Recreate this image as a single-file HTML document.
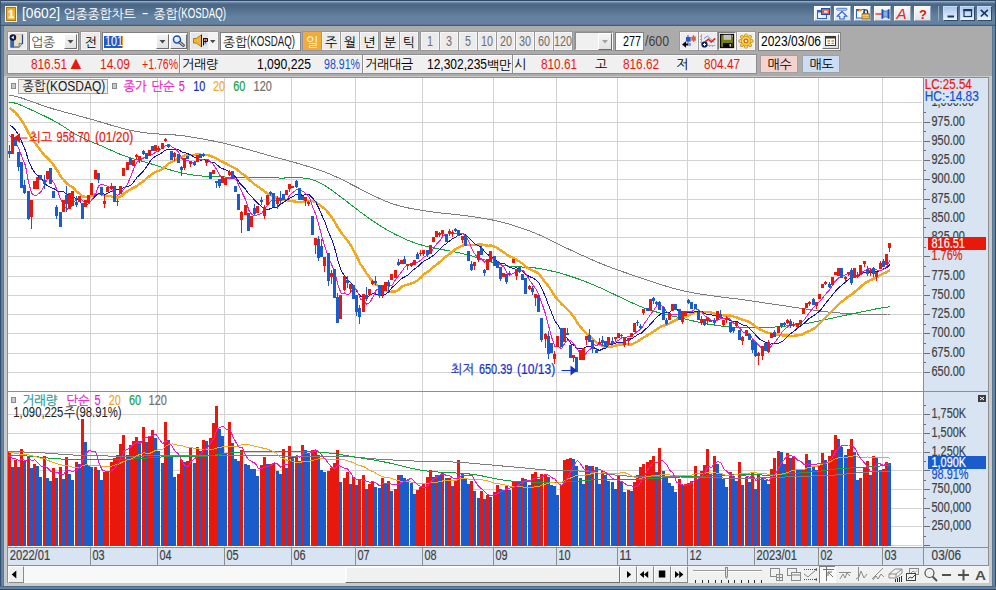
<!DOCTYPE html>
<html lang="ko"><head><meta charset="utf-8"><title>[0602] 업종종합차트 - 종합(KOSDAQ)</title>
<style>
html,body{margin:0;padding:0}
body{width:996px;height:590px;position:relative;overflow:hidden;background:#ababab;font-family:'Liberation Sans','NanumGothic',sans-serif;font-size:12px}
div,span,i{box-sizing:border-box}
.a{position:absolute}
.t{position:absolute;white-space:pre;line-height:14px;height:14px}
.h{position:relative;top:1px}
.x{display:inline-block;white-space:pre;vertical-align:baseline}
.x>i{display:inline-block;font-style:normal;transform-origin:0 50%}
#tb{left:0;top:0;width:996px;height:26px;background:linear-gradient(#2e4866 0,#2e4866 1px,#92acc6 1px,#92acc6 2px,#6a88a6 2px,#6a88a6 3px,#55738f 3px,#55738f 4px,#4a6886 4px,#4a6886 6px,#64829f 17px,#64829f 24px,#5a7896 24px,#5a7896 25px,#3f5d7d 25px,#3f5d7d 26px)}
.fr{background:#5f7f9f}
.btn{position:absolute;height:18px;top:32px;background:#ebebeb;border:1px solid #f6f6f6;box-shadow:0 0 0 1px #989898}
.btn.g{color:#6e6e6e}
.inp{position:absolute;height:19px;top:32px;background:#fff;border:1px solid;border-color:#7e7e7e #868686 #868686 #7e7e7e}
.tbtn{position:absolute;top:6px;width:17px;height:15px;background:linear-gradient(#f6f8fb,#dfe5ee);border:1px solid;border-color:#fff #93a3b8 #93a3b8 #fff}
.wbtn{position:absolute;top:6px;width:15px;height:15px;background:linear-gradient(#a7c6ee,#eef5ff);border:1px solid;border-color:#c6dbf5 #2c4a6c #2c4a6c #c6dbf5}
.dd{background:linear-gradient(#f4f4f4,#e2e2e2);border-color:#fff #6e6e6e #6e6e6e #fff;box-shadow:none}
.cell{position:absolute;top:55px;height:18px;background:#f0f0f0;border-left:1px solid #fcfcfc;border-top:1px solid #fcfcfc}
svg{position:absolute;left:0;top:0;overflow:visible}
svg text{font-family:'Liberation Sans','NanumGothic',sans-serif;white-space:pre}
svg text.s{stroke-width:.2px;paint-order:stroke}
</style></head>
<body>
<div class="a" id="tb"></div>
<div class="a" style="left:995px;top:0;width:1px;height:26px;background:#2f4b69"></div><div class="a" style="left:0;top:0;width:1px;height:26px;background:#36526f"></div>
<div class="a" style="left:0;top:26px;width:4px;height:564px;background:linear-gradient(90deg,#36526f 0,#36526f 1px,#5b7b9b 1px,#5b7b9b 2px,#6989a9 2px,#6989a9 3px,#597999 3px)"></div>
<div class="a" style="left:992px;top:26px;width:4px;height:564px;background:linear-gradient(90deg,#587796 0,#587796 1px,#6685a3 1px,#6685a3 3px,#2f4b69 3px)"></div>
<div class="a" style="left:0;top:586px;width:996px;height:4px;background:linear-gradient(#4a6886 0,#4a6886 1px,#6484a2 1px,#6080a0 3px,#2f4b69 3px)"></div>
<div class="a" style="left:4px;top:76px;width:988px;height:510px;background:#c9c9c9"></div>
<div class="a" style="left:5px;top:6px;width:12px;height:16px;background:#fff3d6;padding:1px"><div style="width:10px;height:14px;border:1px solid #b07810;background:linear-gradient(#e8a528,#f5b938 60%,#e9a320)"></div></div>
<div class="t " style="left:21.5px;top:5.5px;color:#fff;font-size:12px;"><span class="x" style="width:42.0px;font-size:14px"><i style="transform:scaleX(0.981)">[0602] </i></span><span class="h" style="font-size:13px;letter-spacing:-0.22px">업종종합차트</span><span class="x" style="width:18.0px;font-size:14px"><i style="transform:scaleX(1.447)"> - </i></span><span class="h" style="font-size:13px;letter-spacing:-0.22px">종합</span><span class="x" style="width:48.0px;font-size:14px"><i style="transform:scaleX(0.693)">(KOSDAQ)</i></span></div>
<div class="tbtn" style="left:814px"></div>
<div class="tbtn" style="left:834px"></div>
<div class="tbtn" style="left:854px"></div>
<div class="tbtn" style="left:874px"></div>
<div class="tbtn" style="left:894px"></div>
<div class="tbtn" style="left:914px"></div>
<div class="a" style="left:938px;top:6px;width:1px;height:15px;background:#9aa9b8"></div>
<div class="wbtn" style="left:943px"></div>
<div class="wbtn" style="left:960px"></div>
<div class="wbtn" style="left:977px"></div>
<div class="btn " style="left:8px;width:19px;"></div>
<div class="inp" style="left:29px;width:50px"></div>
<div class="t " style="left:31.0px;top:35px;color:#5a5a5a;font-size:12px;"><span class="h" style="font-size:13px;letter-spacing:-0.22px">업종</span></div>
<div class="btn dd" style="left:64px;top:34px;width:13px;height:15px"></div>
<div class="btn " style="left:81px;width:19px;"><div class="t" style="left:2.5px;top:2px"><span class="h" style="font-size:13px;letter-spacing:-0.22px">전</span></div></div>
<div class="inp" style="left:102px;width:86px"></div>
<div class="a" style="left:104px;top:36px;width:18px;height:12px;background:#1c5ccd"></div><div class="a" style="left:122px;top:36px;width:1px;height:12px;background:#f0a030"></div>
<div class="t " style="left:104.5px;top:34px;color:#fff;font-size:12px;"><span class="x" style="width:18.0px;font-size:14px"><i style="transform:scaleX(0.771)">101</i></span></div>
<div class="btn dd" style="left:156px;top:34px;width:13px;height:15px"></div>
<div class="btn dd" style="left:170px;top:34px;width:17px;height:15px"></div>
<div class="btn" style="left:190px;width:28px;background:linear-gradient(90deg,#e6e6e6 0,#e6e6e6 17px,#f2f2f2 17px)"></div>
<div class="inp" style="left:220px;width:81px"></div>
<div class="t " style="left:223.0px;top:34px;color:#202020;font-size:12px;"><span class="h" style="font-size:13px;letter-spacing:-0.22px">종합</span><span class="x" style="width:48.0px;font-size:14px"><i style="transform:scaleX(0.693)">(KOSDAQ)</i></span></div>
<div class="btn " style="left:303px;width:18px;background:#f1ab3a;border-color:#f1ab3a;color:#fff;box-shadow:0 0 0 1px #8e97a6"><div class="t" style="left:2.0px;top:2px"><span class="h" style="font-size:13px;letter-spacing:-0.22px">일</span></div></div>
<div class="btn " style="left:322px;width:18px;"><div class="t" style="left:2.0px;top:2px"><span class="h" style="font-size:13px;letter-spacing:-0.22px">주</span></div></div>
<div class="btn " style="left:341px;width:18px;"><div class="t" style="left:2.0px;top:2px"><span class="h" style="font-size:13px;letter-spacing:-0.22px">월</span></div></div>
<div class="btn " style="left:360px;width:18px;"><div class="t" style="left:2.0px;top:2px"><span class="h" style="font-size:13px;letter-spacing:-0.22px">년</span></div></div>
<div class="btn " style="left:381px;width:18px;"><div class="t" style="left:2.0px;top:2px"><span class="h" style="font-size:13px;letter-spacing:-0.22px">분</span></div></div>
<div class="btn " style="left:400px;width:18px;"><div class="t" style="left:2.0px;top:2px"><span class="h" style="font-size:13px;letter-spacing:-0.22px">틱</span></div></div>
<div class="btn g" style="left:421px;width:18px;"><div class="t" style="left:5.0px;top:1px"><span class="x" style="width:6.0px;font-size:14px"><i style="transform:scaleX(0.771)">1</i></span></div></div>
<div class="btn g" style="left:440px;width:18px;"><div class="t" style="left:5.0px;top:1px"><span class="x" style="width:6.0px;font-size:14px"><i style="transform:scaleX(0.771)">3</i></span></div></div>
<div class="btn g" style="left:459px;width:18px;"><div class="t" style="left:5.0px;top:1px"><span class="x" style="width:6.0px;font-size:14px"><i style="transform:scaleX(0.771)">5</i></span></div></div>
<div class="btn g" style="left:478px;width:18px;"><div class="t" style="left:2.0px;top:1px"><span class="x" style="width:12.0px;font-size:14px"><i style="transform:scaleX(0.771)">10</i></span></div></div>
<div class="btn g" style="left:497px;width:18px;"><div class="t" style="left:2.0px;top:1px"><span class="x" style="width:12.0px;font-size:14px"><i style="transform:scaleX(0.771)">20</i></span></div></div>
<div class="btn g" style="left:516px;width:18px;"><div class="t" style="left:2.0px;top:1px"><span class="x" style="width:12.0px;font-size:14px"><i style="transform:scaleX(0.771)">30</i></span></div></div>
<div class="btn g" style="left:535px;width:18px;"><div class="t" style="left:2.0px;top:1px"><span class="x" style="width:12.0px;font-size:14px"><i style="transform:scaleX(0.771)">60</i></span></div></div>
<div class="btn g" style="left:554px;width:18px;"><div class="t" style="left:-1.0px;top:1px"><span class="x" style="width:18.0px;font-size:14px"><i style="transform:scaleX(0.771)">120</i></span></div></div>
<div class="btn" style="left:575px;width:38px;background:#f0f0f0;border-color:#8c8c8c #f8f8f8 #f8f8f8 #8c8c8c"></div>
<div class="btn dd" style="left:598px;top:33px;width:14px;height:17px"></div>
<div class="inp" style="left:615px;width:29px"></div>
<div class="t " style="left:623.0px;top:34px;color:#000;font-size:12px;"><span class="x" style="width:18.0px;font-size:14px"><i style="transform:scaleX(0.771)">277</i></span></div>
<div class="t " style="left:645.0px;top:34px;color:#404040;font-size:12px;"><span class="x" style="width:24.0px;font-size:14px"><i style="transform:scaleX(0.881)">/600</i></span></div>
<div class="btn " style="left:680px;width:18px;background:#efecef"></div>
<div class="btn " style="left:699px;width:18px;background:#efecef"></div>
<div class="btn " style="left:737px;width:18px;background:#efecef"></div>
<div class="btn " style="left:718px;width:18px;background:#efecef;border-color:#7a7a7a #fafafa #fafafa #7a7a7a"></div>
<div class="inp" style="left:758px;width:83px"></div>
<div class="t " style="left:761.0px;top:34px;color:#000;font-size:12px;"><span class="x" style="width:60.0px;font-size:14px"><i style="transform:scaleX(0.856)">2023/03/06</i></span></div>
<div class="btn dd" style="left:822px;top:34px;width:17px;height:15px"></div>
<div class="a" style="left:7px;top:54px;width:750px;height:20px;background:#8e8e8e"></div>
<div class="cell" style="left:8px;width:171px"></div>
<div class="cell" style="left:180px;width:182px"></div>
<div class="cell" style="left:363px;width:149px"></div>
<div class="cell" style="left:513px;width:243px"></div>
<div class="t " style="left:30.5px;top:57px;color:#e8190c;font-size:12px;"><span class="x" style="width:36.0px;font-size:14px"><i style="transform:scaleX(0.841)">816.51</i></span></div>
<div class="t" style="left:67px;top:53px;color:#e8190c;font-size:18px;line-height:20px;height:20px;font-family:'Liberation Sans','NanumGothic','DejaVu Sans',sans-serif">▲</div>
<div class="t " style="left:100.0px;top:57px;color:#e8190c;font-size:12px;"><span class="x" style="width:30.0px;font-size:14px"><i style="transform:scaleX(0.856)">14.09</i></span></div>
<div class="t " style="left:142.0px;top:57px;color:#e8190c;font-size:12px;"><span class="x" style="width:36.0px;font-size:14px"><i style="transform:scaleX(0.752)">+1.76%</i></span></div>
<div class="t " style="left:182.0px;top:57px;color:#000;font-size:12px;"><span class="h" style="font-size:13px;letter-spacing:-0.22px">거래량</span></div>
<div class="t " style="left:256.5px;top:57px;color:#000;font-size:12px;"><span class="x" style="width:54.0px;font-size:14px"><i style="transform:scaleX(0.867)">1,090,225</i></span></div>
<div class="t " style="left:324.0px;top:57px;color:#1450d0;font-size:12px;"><span class="x" style="width:36.0px;font-size:14px"><i style="transform:scaleX(0.758)">98.91%</i></span></div>
<div class="t " style="left:365.0px;top:57px;color:#000;font-size:12px;"><span class="h" style="font-size:13px;letter-spacing:-0.22px">거래대금</span></div>
<div class="t " style="left:427.0px;top:57px;color:#000;font-size:12px;"><span class="x" style="width:60.0px;font-size:14px"><i style="transform:scaleX(0.856)">12,302,235</i></span><span class="h" style="font-size:13px;letter-spacing:-0.22px">백만</span></div>
<div class="t " style="left:514.0px;top:57px;color:#000;font-size:12px;"><span class="h" style="font-size:13px;letter-spacing:-0.22px">시</span></div>
<div class="t " style="left:541.0px;top:57px;color:#e8190c;font-size:12px;"><span class="x" style="width:36.0px;font-size:14px"><i style="transform:scaleX(0.841)">810.61</i></span></div>
<div class="t " style="left:595.0px;top:57px;color:#000;font-size:12px;"><span class="h" style="font-size:13px;letter-spacing:-0.22px">고</span></div>
<div class="t " style="left:622.5px;top:57px;color:#e8190c;font-size:12px;"><span class="x" style="width:36.0px;font-size:14px"><i style="transform:scaleX(0.841)">816.62</i></span></div>
<div class="t " style="left:676.0px;top:57px;color:#000;font-size:12px;"><span class="h" style="font-size:13px;letter-spacing:-0.22px">저</span></div>
<div class="t " style="left:703.5px;top:57px;color:#e8190c;font-size:12px;"><span class="x" style="width:36.0px;font-size:14px"><i style="transform:scaleX(0.841)">804.47</i></span></div>
<div class="a" style="left:760px;top:55px;width:38px;height:18px;background:#f6d2cd;border:1px solid #a4a0a0"></div>
<div class="t " style="left:767.5px;top:57px;color:#000;font-size:12px;"><span class="h" style="font-size:13px;letter-spacing:-0.22px">매수</span></div>
<div class="a" style="left:802px;top:55px;width:38px;height:18px;background:#c9ddf5;border:1px solid #a0a2a4"></div>
<div class="t " style="left:809.5px;top:57px;color:#000;font-size:12px;"><span class="h" style="font-size:13px;letter-spacing:-0.22px">매도</span></div>
<div class="a" style="left:8px;top:566px;width:981px;height:17px;background:#f1f1f1"></div>
<div class="a" style="left:24px;top:566px;width:596px;height:17px;background:#f8f8f8"></div>
<div class="a" style="left:345px;top:566px;width:275px;height:17px;background:#f0f0f0;border:1px solid;border-color:#fff #707070 #707070 #fff;box-shadow:inset 1px 1px 0 #fbfbfb"></div>
<div class="a" style="left:8px;top:566px;width:16px;height:17px;background:#f0f0f0;border:1px solid;border-color:#fdfdfd #8a8a8a #8a8a8a #fdfdfd"><svg width="14" height="15"></svg></div>
<div class="a" style="left:620px;top:566px;width:17px;height:17px;background:#f0f0f0;border:1px solid;border-color:#fdfdfd #8a8a8a #8a8a8a #fdfdfd"><svg width="15" height="15"></svg></div>
<div class="a" style="left:637px;top:566px;width:17px;height:17px;background:#f0f0f0;border:1px solid;border-color:#fdfdfd #8a8a8a #8a8a8a #fdfdfd"><svg width="15" height="15"></svg></div>
<div class="a" style="left:654px;top:566px;width:17px;height:17px;background:#f0f0f0;border:1px solid;border-color:#fdfdfd #8a8a8a #8a8a8a #fdfdfd"><svg width="15" height="15"></svg></div>
<div class="a" style="left:671px;top:566px;width:17px;height:17px;background:#f0f0f0;border:1px solid;border-color:#fdfdfd #8a8a8a #8a8a8a #fdfdfd"><svg width="15" height="15"></svg></div>
<svg width="996" height="590" viewBox="0 0 996 590">
<rect x="8" y="78" width="915" height="469" fill="#fff"/>
<rect x="923" y="78" width="66" height="488" fill="#d8e4f1"/>
<rect x="8" y="548" width="915" height="18" fill="#d8e4f1"/>
<path d="M8 102.5H922M8 122.5H922M8 141.5H922M8 160.5H922M8 179.5H922M8 199.5H922M8 218.5H922M8 237.5H922M8 256.5H922M8 276.5H922M8 295.5H922M8 314.5H922M8 333.5H922M8 353.5H922M8 372.5H922M8 414.5H922M8 433.5H922M8 452.5H922M8 470.5H922M8 489.5H922M8 508.5H922M8 526.5H922M8 545.5H922M90.5 78V391M90.5 392V547M157.5 78V391M157.5 392V547M224.5 78V391M224.5 392V547M291.5 78V391M291.5 392V547M355.5 78V391M355.5 392V547M422.5 78V391M422.5 392V547M493.5 78V391M493.5 392V547M556.5 78V391M556.5 392V547M617.5 78V391M617.5 392V547M687.5 78V391M687.5 392V547M754.5 78V391M754.5 392V547M818.5 78V391M818.5 392V547M882.5 78V391M882.5 392V547" stroke="#d2d2d2" stroke-width="1" fill="none" shape-rendering="crispEdges"/>
<path d="M8 452h3V546h-3zM14 460h3V546h-3zM20 449h3V546h-3zM27 457h3V546h-3zM33 464h3V546h-3zM43 456h3V546h-3zM52 468h3V546h-3zM59 467h3V546h-3zM65 457h3V546h-3zM75 462h3V546h-3zM81 419h3V546h-3zM94 467h3V546h-3zM103 472h3V546h-3zM106 471h3V546h-3zM110 462h3V546h-3zM113 458h3V546h-3zM116 455h3V546h-3zM119 444h3V546h-3zM122 435h3V546h-3zM129 445h3V546h-3zM132 441h3V546h-3zM135 437h3V546h-3zM142 427h3V546h-3zM148 436h3V546h-3zM151 430h3V546h-3zM164 422h3V546h-3zM177 474h3V546h-3zM180 460h3V546h-3zM186 461h3V546h-3zM189 448h3V546h-3zM196 447h3V546h-3zM202 440h3V546h-3zM209 438h3V546h-3zM212 423h3V546h-3zM215 406h3V546h-3zM228 422h3V546h-3zM240 450h3V546h-3zM260 465h3V546h-3zM263 457h3V546h-3zM269 464h3V546h-3zM272 463h3V546h-3zM282 449h3V546h-3zM288 446h3V546h-3zM295 456h3V546h-3zM301 445h3V546h-3zM311 450h3V546h-3zM314 450h3V546h-3zM327 471h3V546h-3zM330 468h3V546h-3zM333 463h3V546h-3zM336 450h3V546h-3zM343 478h3V546h-3zM346 472h3V546h-3zM352 477h3V546h-3zM358 480h3V546h-3zM362 475h3V546h-3zM368 484h3V546h-3zM371 481h3V546h-3zM381 478h3V546h-3zM387 481h3V546h-3zM394 489h3V546h-3zM397 475h3V546h-3zM416 490h3V546h-3zM419 487h3V546h-3zM422 484h3V546h-3zM426 477h3V546h-3zM429 470h3V546h-3zM435 475h3V546h-3zM441 473h3V546h-3zM448 478h3V546h-3zM454 480h3V546h-3zM457 460h3V546h-3zM470 481h3V546h-3zM480 491h3V546h-3zM486 495h3V546h-3zM493 492h3V546h-3zM496 485h3V546h-3zM505 486h3V546h-3zM512 482h3V546h-3zM515 482h3V546h-3zM521 478h3V546h-3zM531 474h3V546h-3zM534 472h3V546h-3zM540 474h3V546h-3zM544 474h3V546h-3zM560 485h3V546h-3zM563 460h3V546h-3zM566 459h3V546h-3zM569 458h3V546h-3zM585 465h3V546h-3zM591 466h3V546h-3zM601 471h3V546h-3zM617 476h3V546h-3zM627 490h3V546h-3zM633 482h3V546h-3zM636 475h3V546h-3zM639 467h3V546h-3zM642 464h3V546h-3zM646 462h3V546h-3zM649 460h3V546h-3zM652 456h3V546h-3zM658 448h3V546h-3zM678 479h3V546h-3zM684 484h3V546h-3zM687 483h3V546h-3zM690 481h3V546h-3zM694 466h3V546h-3zM700 471h3V546h-3zM703 465h3V546h-3zM706 449h3V546h-3zM713 456h3V546h-3zM729 472h3V546h-3zM738 462h3V546h-3zM745 477h3V546h-3zM751 472h3V546h-3zM757 475h3V546h-3zM770 469h3V546h-3zM773 458h3V546h-3zM777 451h3V546h-3zM786 453h3V546h-3zM792 457h3V546h-3zM802 470h3V546h-3zM805 454h3V546h-3zM818 465h3V546h-3zM821 453h3V546h-3zM828 456h3V546h-3zM831 450h3V546h-3zM834 435h3V546h-3zM847 449h3V546h-3zM850 439h3V546h-3zM859 478h3V546h-3zM863 467h3V546h-3zM866 461h3V546h-3zM872 456h3V546h-3zM882 469h3V546h-3zM885 462h3V546h-3z" fill="#e8190c" shape-rendering="crispEdges"/>
<path d="M11 467h3V546h-3zM17 467h3V546h-3zM23 461h3V546h-3zM30 468h3V546h-3zM36 466h3V546h-3zM39 477h3V546h-3zM46 478h3V546h-3zM49 481h3V546h-3zM55 478h3V546h-3zM62 479h3V546h-3zM68 474h3V546h-3zM71 480h3V546h-3zM78 464h3V546h-3zM84 442h3V546h-3zM87 465h3V546h-3zM90 467h3V546h-3zM97 470h3V546h-3zM100 480h3V546h-3zM126 455h3V546h-3zM138 441h3V546h-3zM145 442h3V546h-3zM154 438h3V546h-3zM157 451h3V546h-3zM161 463h3V546h-3zM167 440h3V546h-3zM170 456h3V546h-3zM173 477h3V546h-3zM183 462h3V546h-3zM193 463h3V546h-3zM199 451h3V546h-3zM205 441h3V546h-3zM218 429h3V546h-3zM221 436h3V546h-3zM224 453h3V546h-3zM231 443h3V546h-3zM234 459h3V546h-3zM237 461h3V546h-3zM244 464h3V546h-3zM247 465h3V546h-3zM250 469h3V546h-3zM253 469h3V546h-3zM256 476h3V546h-3zM266 464h3V546h-3zM276 471h3V546h-3zM279 474h3V546h-3zM285 468h3V546h-3zM291 457h3V546h-3zM298 461h3V546h-3zM304 450h3V546h-3zM307 454h3V546h-3zM317 455h3V546h-3zM320 470h3V546h-3zM323 472h3V546h-3zM339 482h3V546h-3zM349 484h3V546h-3zM355 485h3V546h-3zM365 489h3V546h-3zM374 487h3V546h-3zM378 488h3V546h-3zM384 484h3V546h-3zM390 491h3V546h-3zM400 475h3V546h-3zM403 478h3V546h-3zM406 480h3V546h-3zM410 483h3V546h-3zM413 494h3V546h-3zM432 477h3V546h-3zM438 475h3V546h-3zM445 478h3V546h-3zM451 486h3V546h-3zM461 474h3V546h-3zM464 478h3V546h-3zM467 484h3V546h-3zM473 491h3V546h-3zM477 498h3V546h-3zM483 499h3V546h-3zM489 497h3V546h-3zM499 489h3V546h-3zM502 490h3V546h-3zM508 490h3V546h-3zM518 481h3V546h-3zM524 479h3V546h-3zM528 485h3V546h-3zM537 479h3V546h-3zM547 477h3V546h-3zM550 485h3V546h-3zM553 486h3V546h-3zM556 495h3V546h-3zM572 459h3V546h-3zM575 466h3V546h-3zM579 478h3V546h-3zM582 484h3V546h-3zM588 466h3V546h-3zM595 467h3V546h-3zM598 484h3V546h-3zM604 475h3V546h-3zM607 481h3V546h-3zM611 482h3V546h-3zM614 489h3V546h-3zM620 481h3V546h-3zM623 492h3V546h-3zM630 491h3V546h-3zM655 472h3V546h-3zM662 471h3V546h-3zM665 478h3V546h-3zM668 483h3V546h-3zM671 486h3V546h-3zM674 492h3V546h-3zM681 485h3V546h-3zM697 479h3V546h-3zM709 474h3V546h-3zM716 464h3V546h-3zM719 473h3V546h-3zM722 479h3V546h-3zM725 487h3V546h-3zM732 476h3V546h-3zM735 481h3V546h-3zM741 485h3V546h-3zM748 482h3V546h-3zM754 489h3V546h-3zM761 477h3V546h-3zM764 480h3V546h-3zM767 484h3V546h-3zM780 452h3V546h-3zM783 464h3V546h-3zM789 458h3V546h-3zM796 469h3V546h-3zM799 470h3V546h-3zM808 460h3V546h-3zM812 467h3V546h-3zM815 470h3V546h-3zM824 460h3V546h-3zM837 439h3V546h-3zM840 447h3V546h-3zM844 455h3V546h-3zM853 452h3V546h-3zM856 480h3V546h-3zM869 475h3V546h-3zM875 458h3V546h-3zM879 470h3V546h-3zM888 463h3V546h-3z" fill="#1b5ccd" shape-rendering="crispEdges"/>
<polyline points="8.5,451.5 11.5,451.6 14.5,451.7 17.5,451.8 20.5,451.9 23.5,452.0 26.5,452.1 29.5,452.2 32.5,452.4 35.5,452.5 38.5,452.7 41.5,452.8 44.5,453.0 47.5,453.2 50.5,453.4 53.5,453.6 56.5,453.9 59.5,454.1 62.5,454.3 65.5,454.5 68.5,454.7 71.5,454.9 74.5,455.1 77.5,455.2 80.5,455.4 83.5,455.5 86.5,455.6 89.5,455.7 92.5,455.7 95.5,455.8 98.5,455.8 101.5,455.9 104.5,455.9 107.5,456.0 110.5,456.1 113.5,456.1 116.5,456.1 119.5,456.2 122.5,456.2 125.5,456.2 128.5,456.2 131.5,456.2 134.5,456.1 137.5,456.1 140.5,456.0 143.5,456.0 146.5,455.9 149.5,455.9 152.5,455.8 155.5,455.8 158.5,455.8 161.5,455.8 164.5,455.7 167.5,455.7 170.5,455.7 173.5,455.7 176.5,455.6 179.5,455.6 182.5,455.6 185.5,455.5 188.5,455.5 191.5,455.4 194.5,455.4 197.5,455.3 200.5,455.3 203.5,455.2 206.5,455.2 209.5,455.1 212.5,455.1 215.5,455.1 218.5,455.0 221.5,455.0 224.5,455.0 227.5,455.0 230.5,455.0 233.5,455.0 236.5,455.0 239.5,455.0 242.5,455.0 245.5,455.1 248.5,455.1 251.5,455.2 254.5,455.2 257.5,455.3 260.5,455.4 263.5,455.5 266.5,455.6 269.5,455.7 272.5,455.8 275.5,455.9 278.5,455.9 281.5,456.0 284.5,456.0 287.5,456.1 290.5,456.1 293.5,456.1 296.5,456.1 299.5,456.2 302.5,456.2 305.5,456.2 308.5,456.2 311.5,456.2 314.5,456.3 317.5,456.3 320.5,456.3 323.5,456.3 326.5,456.3 329.5,456.4 332.5,456.4 335.5,456.4 338.5,456.4 341.5,456.5 344.5,456.6 347.5,456.7 350.5,456.9 353.5,457.0 356.5,457.3 359.5,457.5 362.5,457.8 365.5,458.1 368.5,458.4 371.5,458.6 374.5,458.9 377.5,459.1 380.5,459.3 383.5,459.5 386.5,459.6 389.5,459.8 392.5,460.0 395.5,460.1 398.5,460.3 401.5,460.4 404.5,460.6 407.5,460.7 410.5,460.9 413.5,461.0 416.5,461.2 419.5,461.3 422.5,461.4 425.5,461.5 428.5,461.5 431.5,461.6 434.5,461.7 437.5,461.7 440.5,461.8 443.5,461.8 446.5,461.8 449.5,461.9 452.5,462.0 455.5,462.1 458.5,462.3 461.5,462.5 464.5,462.7 467.5,462.9 470.5,463.2 473.5,463.5 476.5,463.7 479.5,464.0 482.5,464.3 485.5,464.5 488.5,464.8 491.5,465.0 494.5,465.3 497.5,465.6 500.5,465.8 503.5,466.1 506.5,466.3 509.5,466.6 512.5,466.9 515.5,467.2 518.5,467.4 521.5,467.7 524.5,468.0 527.5,468.3 530.5,468.6 533.5,468.9 536.5,469.2 539.5,469.5 542.5,469.8 545.5,470.0 548.5,470.2 551.5,470.3 554.5,470.5 557.5,470.6 560.5,470.6 563.5,470.7 566.5,470.7 569.5,470.8 572.5,470.8 575.5,470.9 578.5,471.0 581.5,471.2 584.5,471.4 587.5,471.7 590.5,472.0 593.5,472.4 596.5,472.8 599.5,473.2 602.5,473.6 605.5,474.0 608.5,474.4 611.5,474.7 614.5,475.0 617.5,475.3 620.5,475.6 623.5,475.8 626.5,476.0 629.5,476.1 632.5,476.2 635.5,476.3 638.5,476.4 641.5,476.4 644.5,476.4 647.5,476.4 650.5,476.4 653.5,476.4 656.5,476.4 659.5,476.5 662.5,476.5 665.5,476.6 668.5,476.6 671.5,476.7 674.5,476.8 677.5,476.9 680.5,477.0 683.5,477.2 686.5,477.3 689.5,477.4 692.5,477.5 695.5,477.6 698.5,477.7 701.5,477.7 704.5,477.8 707.5,477.8 710.5,477.9 713.5,477.9 716.5,477.9 719.5,477.9 722.5,478.0 725.5,478.0 728.5,478.0 731.5,478.0 734.5,478.0 737.5,478.1 740.5,478.1 743.5,478.1 746.5,478.1 749.5,478.1 752.5,478.1 755.5,478.0 758.5,478.0 761.5,477.9 764.5,477.8 767.5,477.7 770.5,477.6 773.5,477.5 776.5,477.3 779.5,477.2 782.5,477.1 785.5,477.0 788.5,476.9 791.5,476.7 794.5,476.6 797.5,476.5 800.5,476.4 803.5,476.3 806.5,476.2 809.5,476.1 812.5,476.0 815.5,475.9 818.5,475.9 821.5,475.8 824.5,475.6 827.5,475.5 830.5,475.3 833.5,475.1 836.5,474.9 839.5,474.7 842.5,474.4 845.5,474.1 848.5,473.7 851.5,473.4 854.5,473.1 857.5,472.9 860.5,472.6 863.5,472.4 866.5,472.2 869.5,472.0 872.5,471.9 875.5,471.8 878.5,471.6 881.5,471.5 884.5,471.4 887.5,471.4 890.0,471.3" fill="none" stroke="#7d7d7d" stroke-width="1" shape-rendering="crispEdges" stroke-linejoin="round"/>
<polyline points="8.5,455.4 11.5,455.5 14.5,455.5 17.5,455.5 20.5,455.6 23.5,455.8 26.5,456.0 29.5,456.2 32.5,456.4 35.5,456.7 38.5,457.0 41.5,457.3 44.5,457.7 47.5,458.0 50.5,458.3 53.5,458.5 56.5,458.7 59.5,458.9 62.5,459.1 65.5,459.2 68.5,459.3 71.5,459.4 74.5,459.5 77.5,459.5 80.5,459.6 83.5,459.6 86.5,459.7 89.5,459.7 92.5,459.8 95.5,459.8 98.5,459.8 101.5,459.8 104.5,459.8 107.5,459.8 110.5,459.8 113.5,459.7 116.5,459.7 119.5,459.6 122.5,459.5 125.5,459.4 128.5,459.3 131.5,459.1 134.5,459.0 137.5,458.8 140.5,458.6 143.5,458.4 146.5,458.1 149.5,457.8 152.5,457.6 155.5,457.4 158.5,457.2 161.5,457.0 164.5,456.9 167.5,456.8 170.5,456.8 173.5,456.8 176.5,456.8 179.5,456.9 182.5,456.9 185.5,456.9 188.5,456.9 191.5,456.9 194.5,456.9 197.5,456.8 200.5,456.7 203.5,456.5 206.5,456.2 209.5,455.8 212.5,455.4 215.5,455.0 218.5,454.6 221.5,454.1 224.5,453.7 227.5,453.4 230.5,453.0 233.5,452.7 236.5,452.4 239.5,452.2 242.5,452.0 245.5,451.8 248.5,451.7 251.5,451.5 254.5,451.4 257.5,451.4 260.5,451.4 263.5,451.4 266.5,451.4 269.5,451.4 272.5,451.5 275.5,451.5 278.5,451.5 281.5,451.5 284.5,451.5 287.5,451.6 290.5,451.6 293.5,451.6 296.5,451.6 299.5,451.6 302.5,451.6 305.5,451.6 308.5,451.6 311.5,451.7 314.5,451.8 317.5,452.0 320.5,452.2 323.5,452.4 326.5,452.7 329.5,453.1 332.5,453.5 335.5,453.9 338.5,454.4 341.5,454.8 344.5,455.3 347.5,455.7 350.5,456.2 353.5,456.7 356.5,457.2 359.5,457.7 362.5,458.2 365.5,458.7 368.5,459.2 371.5,459.6 374.5,460.1 377.5,460.7 380.5,461.2 383.5,461.8 386.5,462.4 389.5,463.0 392.5,463.7 395.5,464.4 398.5,465.1 401.5,465.8 404.5,466.6 407.5,467.3 410.5,468.1 413.5,468.7 416.5,469.4 419.5,469.9 422.5,470.4 425.5,470.8 428.5,471.2 431.5,471.5 434.5,471.8 437.5,472.0 440.5,472.2 443.5,472.4 446.5,472.5 449.5,472.7 452.5,472.9 455.5,473.0 458.5,473.1 461.5,473.3 464.5,473.5 467.5,473.8 470.5,474.1 473.5,474.4 476.5,474.9 479.5,475.4 482.5,476.0 485.5,476.6 488.5,477.3 491.5,477.9 494.5,478.5 497.5,479.1 500.5,479.6 503.5,480.1 506.5,480.5 509.5,480.9 512.5,481.2 515.5,481.4 518.5,481.6 521.5,481.7 524.5,481.8 527.5,481.9 530.5,482.0 533.5,482.1 536.5,482.2 539.5,482.2 542.5,482.3 545.5,482.3 548.5,482.4 551.5,482.4 554.5,482.4 557.5,482.4 560.5,482.3 563.5,482.2 566.5,482.0 569.5,481.9 572.5,481.6 575.5,481.4 578.5,481.1 581.5,480.9 584.5,480.6 587.5,480.3 590.5,480.1 593.5,479.8 596.5,479.6 599.5,479.5 602.5,479.3 605.5,479.3 608.5,479.3 611.5,479.3 614.5,479.4 617.5,479.5 620.5,479.6 623.5,479.6 626.5,479.7 629.5,479.7 632.5,479.6 635.5,479.5 638.5,479.4 641.5,479.3 644.5,479.1 647.5,479.0 650.5,478.8 653.5,478.6 656.5,478.4 659.5,478.2 662.5,478.0 665.5,477.8 668.5,477.6 671.5,477.4 674.5,477.3 677.5,477.1 680.5,477.0 683.5,476.9 686.5,476.8 689.5,476.7 692.5,476.6 695.5,476.5 698.5,476.3 701.5,476.2 704.5,476.1 707.5,475.9 710.5,475.8 713.5,475.6 716.5,475.5 719.5,475.3 722.5,475.2 725.5,475.1 728.5,475.1 731.5,475.0 734.5,474.9 737.5,474.9 740.5,474.8 743.5,474.8 746.5,474.8 749.5,474.8 752.5,474.8 755.5,474.8 758.5,474.9 761.5,475.0 764.5,475.0 767.5,475.0 770.5,475.0 773.5,474.9 776.5,474.8 779.5,474.6 782.5,474.4 785.5,474.1 788.5,473.9 791.5,473.6 794.5,473.3 797.5,473.1 800.5,472.9 803.5,472.7 806.5,472.5 809.5,472.2 812.5,471.9 815.5,471.6 818.5,471.3 821.5,470.9 824.5,470.5 827.5,470.1 830.5,469.7 833.5,469.3 836.5,469.0 839.5,468.7 842.5,468.4 845.5,468.2 848.5,468.1 851.5,467.9 854.5,467.8 857.5,467.6 860.5,467.4 863.5,467.2 866.5,467.0 869.5,466.8 872.5,466.6 875.5,466.3 878.5,466.1 881.5,465.9 884.5,465.7 887.5,465.5 890.0,465.4" fill="none" stroke="#15a03c" stroke-width="1" shape-rendering="crispEdges" stroke-linejoin="round"/>
<polyline points="9.5,452.0 12.7,452.8 15.9,453.3 19.1,454.1 22.3,454.0 25.5,454.6 28.6,454.9 31.8,455.8 35.0,456.4 38.2,457.2 41.4,458.5 44.6,458.8 47.8,460.2 51.0,461.7 54.2,462.5 57.4,463.9 60.6,464.4 63.7,465.5 66.9,465.5 70.1,466.3 73.3,467.7 76.5,467.4 79.7,467.6 82.9,465.2 86.1,464.9 89.3,465.1 92.5,465.6 95.7,465.5 98.8,465.8 102.0,466.5 105.2,466.3 108.4,467.0 111.6,466.2 114.8,465.1 118.0,464.4 121.2,462.7 124.4,461.1 127.6,459.9 130.8,459.3 133.9,457.6 137.1,455.5 140.3,454.4 143.5,452.6 146.7,453.7 149.9,453.4 153.1,451.7 156.3,450.2 159.5,449.4 162.7,449.1 165.9,446.2 169.0,444.6 172.2,443.9 175.4,444.6 178.6,445.4 181.8,445.7 185.0,446.6 188.2,447.9 191.4,447.5 194.6,448.4 197.8,448.7 201.0,449.4 204.1,449.3 207.3,450.0 210.5,449.8 213.7,449.2 216.9,448.0 220.1,447.5 223.3,446.8 226.5,446.3 229.7,446.3 232.9,446.4 236.1,446.6 239.2,445.8 242.4,444.6 245.6,444.8 248.8,444.9 252.0,445.3 255.2,446.4 258.4,447.0 261.6,447.9 264.8,448.3 268.0,449.5 271.2,450.6 274.3,451.9 277.5,454.3 280.7,457.7 283.9,458.7 287.1,460.3 290.3,459.9 293.5,461.7 296.7,462.3 299.9,462.4 303.1,461.6 306.3,461.6 309.4,461.1 312.6,460.4 315.8,459.4 319.0,458.7 322.2,458.4 325.4,458.8 328.6,459.5 331.8,459.7 335.0,459.6 338.2,459.0 341.4,459.5 344.5,459.7 347.7,460.9 350.9,461.7 354.1,463.2 357.3,464.6 360.5,465.8 363.7,466.5 366.9,468.7 370.1,470.4 373.3,471.8 376.5,473.6 379.6,475.5 382.8,476.7 386.0,477.4 389.2,477.8 392.4,478.8 395.6,479.9 398.8,480.5 402.0,481.7 405.2,481.5 408.4,481.6 411.6,482.2 414.7,482.7 417.9,483.3 421.1,483.4 424.3,483.6 427.5,483.7 430.7,482.8 433.9,482.4 437.1,482.1 440.3,481.5 443.5,480.8 446.7,480.8 449.8,480.5 453.0,480.7 456.2,480.2 459.4,478.7 462.6,478.7 465.8,478.8 469.0,479.1 472.2,479.2 475.4,479.6 478.6,479.8 481.8,479.8 484.9,480.4 488.1,481.0 491.3,482.0 494.5,483.1 497.7,483.5 500.9,484.2 504.1,484.9 507.3,485.6 510.5,486.2 513.7,486.4 516.9,486.2 520.0,486.2 523.2,487.1 526.4,487.4 529.6,487.7 532.8,487.2 536.0,486.8 539.2,486.2 542.4,485.0 545.6,484.1 548.8,483.1 552.0,482.6 555.1,482.0 558.3,482.1 561.5,482.1 564.7,480.7 567.9,479.1 571.1,477.8 574.3,476.2 577.5,475.4 580.7,475.2 583.9,475.4 587.1,474.7 590.2,474.1 593.4,473.1 596.6,472.8 599.8,473.4 603.0,472.9 606.2,473.0 609.4,473.4 612.6,473.6 615.8,473.8 619.0,473.3 622.2,472.6 625.3,472.9 628.5,474.4 631.7,476.0 634.9,477.2 638.1,478.0 641.3,478.1 644.5,477.4 647.7,476.3 650.9,476.0 654.1,475.5 657.3,475.8 660.4,474.9 663.6,474.2 666.8,474.6 670.0,475.0 673.2,475.2 676.4,475.7 679.6,475.2 682.8,475.7 686.0,475.8 689.2,475.4 692.4,474.9 695.5,473.7 698.7,473.5 701.9,473.3 705.1,473.2 708.3,472.5 711.5,473.1 714.7,472.9 717.9,473.3 721.1,473.3 724.3,474.9 727.5,475.7 730.6,475.4 733.8,475.0 737.0,474.8 740.2,473.3 743.4,473.6 746.6,473.2 749.8,473.1 753.0,472.5 756.2,472.9 759.4,473.4 762.6,473.3 765.7,473.7 768.9,474.7 772.1,475.7 775.3,474.9 778.5,474.6 781.7,474.0 784.9,473.6 788.1,472.3 791.3,470.9 794.5,470.1 797.7,469.8 800.8,469.2 804.0,469.6 807.2,468.0 810.4,467.2 813.6,466.4 816.8,466.3 820.0,465.1 823.2,464.0 826.4,463.2 829.6,462.0 832.8,460.3 835.9,458.6 839.1,457.6 842.3,457.4 845.5,457.6 848.7,456.8 851.9,456.1 855.1,455.8 858.3,457.0 861.5,457.4 864.7,457.3 867.9,456.9 871.0,457.9 874.2,457.7 877.4,457.2 880.6,457.2 883.8,457.4 887.0,457.9 890.2,458.1" fill="none" stroke="#f2a81a" stroke-width="1" shape-rendering="crispEdges" stroke-linejoin="round"/>
<polyline points="9.5,456.3 12.7,458.2 15.9,458.8 19.1,460.7 22.3,459.1 25.5,460.8 28.6,458.8 31.8,460.4 35.0,459.8 38.2,463.2 41.4,466.4 44.6,466.2 47.8,468.2 51.0,471.6 54.2,472.0 57.4,472.2 60.6,474.4 63.7,474.6 66.9,469.7 70.1,470.9 73.3,471.3 76.5,470.3 79.7,467.4 82.9,459.9 86.1,453.4 89.3,450.4 92.5,451.4 95.7,452.0 98.8,462.2 102.0,469.8 105.2,471.1 108.4,471.9 111.6,470.8 114.8,468.4 118.0,463.4 121.2,457.9 124.4,450.7 127.6,449.4 130.8,446.7 133.9,443.9 137.1,442.5 140.3,443.7 143.5,438.1 146.7,437.5 149.9,436.5 153.1,435.2 156.3,434.6 159.5,439.4 162.7,443.6 165.9,440.8 169.0,442.8 172.2,446.5 175.4,451.6 178.6,453.8 181.8,461.4 185.0,465.8 188.2,466.8 191.4,460.9 194.6,458.7 197.8,456.1 201.0,453.8 204.1,449.6 207.3,448.3 210.5,443.3 213.7,438.5 216.9,429.5 220.1,427.4 223.3,426.4 226.5,429.4 229.7,429.2 232.9,436.6 236.1,442.6 239.2,447.6 242.4,447.0 245.6,455.4 248.8,459.8 252.0,461.8 255.2,463.3 258.4,468.5 261.6,468.7 264.8,467.1 268.0,466.2 271.2,465.2 274.3,462.6 277.5,463.8 280.7,467.2 283.9,464.2 287.1,465.0 290.3,461.6 293.5,458.7 296.7,455.1 299.9,457.5 303.1,452.9 306.3,453.7 309.4,453.2 312.6,452.0 315.8,449.8 319.0,451.8 322.2,455.8 325.4,459.4 328.6,463.6 331.8,467.2 335.0,468.8 338.2,464.8 341.4,466.8 344.5,468.2 347.7,469.0 350.9,473.2 354.1,478.6 357.3,479.2 360.5,479.6 363.7,480.2 366.9,481.2 370.1,482.5 373.3,481.7 376.5,483.2 379.6,485.8 382.8,483.6 386.0,483.6 389.2,483.6 392.4,484.4 395.6,484.6 398.8,484.0 402.0,482.2 405.2,481.6 408.4,479.4 411.6,478.2 414.7,482.0 417.9,485.0 421.1,486.8 424.3,487.6 427.5,486.4 430.7,481.6 433.9,479.0 437.1,476.6 440.3,474.8 443.5,474.0 446.7,475.6 449.8,475.8 453.0,478.0 456.2,479.0 459.4,476.4 462.6,475.6 465.8,475.6 469.0,475.2 472.2,475.4 475.4,481.6 478.6,486.4 481.8,489.0 484.9,492.0 488.1,494.8 491.3,496.0 494.5,494.8 497.7,493.6 500.9,491.6 504.1,490.6 507.3,488.4 510.5,488.0 513.7,487.4 516.9,486.0 520.0,484.2 523.2,482.6 526.4,480.4 529.6,481.0 532.8,479.4 536.0,477.6 539.2,477.8 542.4,476.8 545.6,474.6 548.8,475.2 552.0,477.8 555.1,479.2 558.3,483.4 561.5,485.6 564.7,482.2 567.9,477.0 571.1,471.4 574.3,464.2 577.5,460.4 580.7,464.0 583.9,469.0 587.1,470.4 590.2,471.8 593.4,471.8 596.6,469.6 599.8,469.6 603.0,470.8 606.2,472.6 609.4,475.6 612.6,478.5 615.8,479.5 619.0,480.5 622.2,481.7 625.3,483.9 628.5,485.6 631.7,486.0 634.9,487.2 638.1,486.0 641.3,481.0 644.5,475.8 647.7,470.0 650.9,465.6 654.1,461.8 657.3,462.8 660.4,459.6 663.6,461.4 666.8,465.0 670.0,470.4 673.2,473.2 676.4,482.0 679.6,483.6 682.8,485.0 686.0,485.2 689.2,484.6 692.4,482.4 695.5,479.8 698.7,478.6 701.9,476.0 705.1,472.4 708.3,466.0 711.5,467.6 714.7,463.0 717.9,461.6 721.1,463.2 724.3,469.2 727.5,471.8 730.6,475.0 733.8,477.4 737.0,479.0 740.2,475.6 743.4,475.2 746.6,476.2 749.8,477.4 753.0,475.6 756.2,481.0 759.4,479.0 762.6,479.0 765.7,478.6 768.9,481.0 772.1,477.0 775.3,473.6 778.5,468.4 781.7,462.8 784.9,458.8 788.1,455.6 791.3,455.6 794.5,456.8 797.7,460.2 800.8,461.4 804.0,464.7 807.2,463.9 810.4,464.5 813.6,464.1 816.8,464.1 820.0,463.2 823.2,463.0 826.4,463.0 829.6,460.8 832.8,456.8 835.9,450.8 839.1,448.0 842.3,445.4 845.5,445.2 848.7,445.0 851.9,445.8 855.1,448.4 858.3,455.0 861.5,459.6 864.7,463.2 867.9,467.6 871.0,472.2 874.2,467.4 877.4,463.4 880.6,464.0 883.8,465.6 887.0,463.0 890.2,464.4" fill="none" stroke="#e81cc8" stroke-width="1" shape-rendering="crispEdges" stroke-linejoin="round"/>
<polyline points="8.5,94.9 11.5,95.4 14.5,96.1 17.5,96.8 20.5,97.7 23.5,98.7 26.5,99.7 29.5,100.8 32.5,101.9 35.5,102.9 38.5,104.0 41.5,105.1 44.5,106.1 47.5,107.1 50.5,108.0 53.5,109.0 56.5,109.8 59.5,110.7 62.5,111.5 65.5,112.3 68.5,113.1 71.5,113.9 74.5,114.7 77.5,115.5 80.5,116.3 83.5,117.1 86.5,118.0 89.5,118.8 92.5,119.7 95.5,120.5 98.5,121.4 101.5,122.3 104.5,123.2 107.5,124.0 110.5,125.0 113.5,125.8 116.5,126.7 119.5,127.5 122.5,128.3 125.5,129.1 128.5,129.8 131.5,130.5 134.5,131.1 137.5,131.6 140.5,132.1 143.5,132.6 146.5,133.0 149.5,133.3 152.5,133.6 155.5,133.8 158.5,134.0 161.5,134.2 164.5,134.3 167.5,134.4 170.5,134.6 173.5,134.8 176.5,135.1 179.5,135.4 182.5,135.7 185.5,136.1 188.5,136.6 191.5,137.1 194.5,137.6 197.5,138.1 200.5,138.6 203.5,139.1 206.5,139.7 209.5,140.3 212.5,140.8 215.5,141.4 218.5,142.1 221.5,142.7 224.5,143.4 227.5,144.1 230.5,144.8 233.5,145.6 236.5,146.3 239.5,147.2 242.5,148.0 245.5,148.8 248.5,149.6 251.5,150.5 254.5,151.3 257.5,152.2 260.5,153.1 263.5,153.9 266.5,154.8 269.5,155.6 272.5,156.5 275.5,157.3 278.5,158.1 281.5,158.9 284.5,159.7 287.5,160.5 290.5,161.3 293.5,162.2 296.5,163.0 299.5,163.9 302.5,164.8 305.5,165.7 308.5,166.6 311.5,167.6 314.5,168.5 317.5,169.5 320.5,170.5 323.5,171.6 326.5,172.7 329.5,173.9 332.5,175.2 335.5,176.5 338.5,177.9 341.5,179.4 344.5,180.9 347.5,182.4 350.5,184.0 353.5,185.5 356.5,187.0 359.5,188.6 362.5,190.1 365.5,191.6 368.5,193.2 371.5,194.7 374.5,196.2 377.5,197.6 380.5,198.9 383.5,200.3 386.5,201.5 389.5,202.7 392.5,203.8 395.5,204.7 398.5,205.6 401.5,206.4 404.5,207.1 407.5,207.8 410.5,208.4 413.5,208.9 416.5,209.4 419.5,209.9 422.5,210.4 425.5,210.9 428.5,211.3 431.5,211.8 434.5,212.2 437.5,212.6 440.5,212.9 443.5,213.3 446.5,213.6 449.5,213.9 452.5,214.2 455.5,214.5 458.5,214.8 461.5,215.2 464.5,215.5 467.5,215.9 470.5,216.3 473.5,216.8 476.5,217.2 479.5,217.7 482.5,218.2 485.5,218.8 488.5,219.3 491.5,219.8 494.5,220.4 497.5,221.1 500.5,221.8 503.5,222.5 506.5,223.4 509.5,224.2 512.5,225.1 515.5,226.1 518.5,227.1 521.5,228.1 524.5,229.1 527.5,230.2 530.5,231.3 533.5,232.5 536.5,233.7 539.5,235.0 542.5,236.3 545.5,237.7 548.5,239.2 551.5,240.7 554.5,242.2 557.5,243.7 560.5,245.1 563.5,246.6 566.5,248.1 569.5,249.5 572.5,250.9 575.5,252.3 578.5,253.7 581.5,255.1 584.5,256.4 587.5,257.8 590.5,259.1 593.5,260.5 596.5,261.7 599.5,263.0 602.5,264.2 605.5,265.4 608.5,266.6 611.5,267.7 614.5,268.8 617.5,269.9 620.5,270.9 623.5,272.0 626.5,273.0 629.5,274.1 632.5,275.1 635.5,276.1 638.5,277.2 641.5,278.2 644.5,279.3 647.5,280.3 650.5,281.3 653.5,282.3 656.5,283.2 659.5,284.2 662.5,285.1 665.5,286.0 668.5,286.9 671.5,287.8 674.5,288.6 677.5,289.4 680.5,290.1 683.5,290.8 686.5,291.5 689.5,292.1 692.5,292.7 695.5,293.2 698.5,293.7 701.5,294.2 704.5,294.7 707.5,295.1 710.5,295.6 713.5,296.0 716.5,296.4 719.5,296.8 722.5,297.2 725.5,297.6 728.5,297.9 731.5,298.3 734.5,298.6 737.5,299.0 740.5,299.4 743.5,299.8 746.5,300.2 749.5,300.6 752.5,301.1 755.5,301.5 758.5,302.0 761.5,302.4 764.5,302.9 767.5,303.3 770.5,303.7 773.5,304.2 776.5,304.6 779.5,305.1 782.5,305.5 785.5,306.0 788.5,306.4 791.5,306.9 794.5,307.3 797.5,307.8 800.5,308.2 803.5,308.7 806.5,309.1 809.5,309.6 812.5,310.0 815.5,310.4 818.5,310.8 821.5,311.2 824.5,311.6 827.5,311.9 830.5,312.3 833.5,312.5 836.5,312.8 839.5,313.0 842.5,313.3 845.5,313.5 848.5,313.7 851.5,313.8 854.5,313.9 857.5,314.0 860.5,314.1 863.5,314.1 866.5,314.2 869.5,314.2 872.5,314.2 875.5,314.1 878.5,314.1 881.5,314.1 884.5,314.1 887.5,314.0 890.0,314.0" fill="none" stroke="#7d7d7d" stroke-width="1" shape-rendering="crispEdges" stroke-linejoin="round"/>
<polyline points="8.5,101.9 11.5,102.4 14.5,103.0 17.5,103.9 20.5,105.0 23.5,106.2 26.5,107.6 29.5,109.0 32.5,110.5 35.5,111.8 38.5,113.2 41.5,114.6 44.5,116.0 47.5,117.5 50.5,119.0 53.5,120.6 56.5,122.3 59.5,124.0 62.5,125.9 65.5,127.8 68.5,129.8 71.5,131.8 74.5,133.6 77.5,135.3 80.5,136.9 83.5,138.3 86.5,139.7 89.5,141.0 92.5,142.3 95.5,143.5 98.5,144.7 101.5,145.9 104.5,147.2 107.5,148.6 110.5,150.0 113.5,151.4 116.5,152.7 119.5,154.0 122.5,155.2 125.5,156.3 128.5,157.3 131.5,158.2 134.5,159.1 137.5,159.9 140.5,160.7 143.5,161.6 146.5,162.5 149.5,163.4 152.5,164.3 155.5,165.2 158.5,166.2 161.5,167.2 164.5,168.2 167.5,169.1 170.5,170.0 173.5,170.9 176.5,171.7 179.5,172.5 182.5,173.2 185.5,173.8 188.5,174.3 191.5,174.8 194.5,175.2 197.5,175.6 200.5,175.9 203.5,176.1 206.5,176.3 209.5,176.4 212.5,176.6 215.5,176.7 218.5,176.8 221.5,176.9 224.5,177.0 227.5,177.1 230.5,177.1 233.5,177.1 236.5,177.2 239.5,177.2 242.5,177.2 245.5,177.3 248.5,177.3 251.5,177.4 254.5,177.4 257.5,177.5 260.5,177.6 263.5,177.7 266.5,177.8 269.5,177.8 272.5,177.9 275.5,177.9 278.5,178.0 281.5,178.0 284.5,178.0 287.5,177.9 290.5,177.9 293.5,177.8 296.5,177.8 299.5,177.9 302.5,178.0 305.5,178.3 308.5,178.7 311.5,179.4 314.5,180.4 317.5,181.6 320.5,183.1 323.5,184.8 326.5,186.6 329.5,188.6 332.5,190.8 335.5,193.0 338.5,195.2 341.5,197.5 344.5,199.8 347.5,202.1 350.5,204.5 353.5,206.8 356.5,209.1 359.5,211.4 362.5,213.6 365.5,215.8 368.5,218.0 371.5,220.1 374.5,222.1 377.5,224.1 380.5,226.0 383.5,227.8 386.5,229.6 389.5,231.3 392.5,232.9 395.5,234.5 398.5,235.9 401.5,237.4 404.5,238.7 407.5,240.1 410.5,241.3 413.5,242.4 416.5,243.4 419.5,244.4 422.5,245.3 425.5,246.1 428.5,246.8 431.5,247.5 434.5,248.1 437.5,248.7 440.5,249.3 443.5,249.8 446.5,250.4 449.5,250.9 452.5,251.5 455.5,252.1 458.5,252.7 461.5,253.4 464.5,254.1 467.5,254.8 470.5,255.6 473.5,256.5 476.5,257.4 479.5,258.3 482.5,259.2 485.5,260.2 488.5,261.2 491.5,262.1 494.5,263.1 497.5,263.9 500.5,264.7 503.5,265.4 506.5,265.9 509.5,266.3 512.5,266.6 515.5,266.8 518.5,266.9 521.5,267.0 524.5,267.1 527.5,267.3 530.5,267.5 533.5,267.8 536.5,268.1 539.5,268.6 542.5,269.1 545.5,269.7 548.5,270.3 551.5,271.0 554.5,271.7 557.5,272.4 560.5,273.2 563.5,274.1 566.5,275.0 569.5,276.0 572.5,277.0 575.5,278.0 578.5,279.0 581.5,280.1 584.5,281.3 587.5,282.4 590.5,283.7 593.5,284.9 596.5,286.2 599.5,287.5 602.5,288.8 605.5,290.2 608.5,291.7 611.5,293.1 614.5,294.5 617.5,296.0 620.5,297.4 623.5,298.9 626.5,300.3 629.5,301.7 632.5,303.0 635.5,304.4 638.5,305.7 641.5,306.9 644.5,308.1 647.5,309.2 650.5,310.2 653.5,311.1 656.5,312.0 659.5,312.9 662.5,313.6 665.5,314.4 668.5,315.1 671.5,315.8 674.5,316.5 677.5,317.2 680.5,318.0 683.5,318.7 686.5,319.4 689.5,320.1 692.5,320.8 695.5,321.4 698.5,322.1 701.5,322.7 704.5,323.3 707.5,323.9 710.5,324.4 713.5,324.9 716.5,325.4 719.5,325.8 722.5,326.2 725.5,326.6 728.5,326.9 731.5,327.2 734.5,327.4 737.5,327.6 740.5,327.8 743.5,327.9 746.5,327.9 749.5,327.9 752.5,327.9 755.5,327.9 758.5,327.8 761.5,327.7 764.5,327.6 767.5,327.4 770.5,327.3 773.5,327.1 776.5,326.9 779.5,326.6 782.5,326.4 785.5,326.1 788.5,325.8 791.5,325.5 794.5,325.1 797.5,324.7 800.5,324.3 803.5,323.9 806.5,323.4 809.5,322.9 812.5,322.4 815.5,321.8 818.5,321.2 821.5,320.5 824.5,319.9 827.5,319.2 830.5,318.5 833.5,317.8 836.5,317.1 839.5,316.5 842.5,315.8 845.5,315.2 848.5,314.6 851.5,314.0 854.5,313.4 857.5,312.8 860.5,312.2 863.5,311.5 866.5,310.9 869.5,310.3 872.5,309.6 875.5,309.0 878.5,308.4 881.5,307.9 884.5,307.4 887.5,307.1 890.0,306.8" fill="none" stroke="#15a03c" stroke-width="1" shape-rendering="crispEdges" stroke-linejoin="round"/>
<polyline points="9.5,108.0 12.7,110.3 15.9,113.1 19.1,117.0 22.3,121.8 25.5,126.9 28.6,133.3 31.8,138.7 35.0,143.1 38.2,147.4 41.4,151.7 44.6,155.3 47.8,158.3 51.0,161.8 54.2,165.8 57.4,170.8 60.6,176.3 63.7,180.0 66.9,183.5 70.1,185.9 73.3,187.7 76.5,191.3 79.7,193.8 82.9,196.4 86.1,197.0 89.3,197.1 92.5,195.3 95.7,193.8 98.8,193.7 102.0,194.6 105.2,195.6 108.4,195.8 111.6,196.5 114.8,197.4 118.0,197.6 121.2,196.1 124.4,193.1 127.6,191.2 130.8,189.2 133.9,187.6 137.1,185.8 140.3,183.3 143.5,181.2 146.7,178.2 149.9,175.7 153.1,173.5 156.3,171.6 159.5,170.5 162.7,168.7 165.9,165.9 169.0,163.2 172.2,161.8 175.4,160.2 178.6,158.3 181.8,156.7 185.0,155.3 188.2,154.9 191.4,154.8 194.6,154.8 197.8,154.5 201.0,154.7 204.1,154.7 207.3,155.0 210.5,156.0 213.7,157.1 216.9,158.7 220.1,160.7 223.3,162.1 226.5,163.8 229.7,165.5 232.9,167.1 236.1,168.7 239.2,171.5 242.4,174.0 245.6,175.8 248.8,179.4 252.0,182.2 255.2,184.9 258.4,186.9 261.6,189.3 264.8,191.7 268.0,193.7 271.2,195.3 274.3,196.7 277.5,198.1 280.7,199.0 283.9,199.7 287.1,200.4 290.3,200.8 293.5,201.4 296.7,201.8 299.9,202.2 303.1,201.7 306.3,201.0 309.4,200.8 312.6,201.0 315.8,202.1 319.0,204.3 322.2,206.8 325.4,209.5 328.6,213.2 331.8,217.2 335.0,222.3 338.2,228.1 341.4,233.0 344.5,236.8 347.7,240.9 350.9,245.6 354.1,251.4 357.3,257.7 360.5,264.2 363.7,268.9 366.9,273.8 370.1,278.4 373.3,282.4 376.5,284.8 379.6,287.7 382.8,289.1 386.0,290.4 389.2,291.9 392.4,291.5 395.6,291.4 398.8,289.7 402.0,286.6 405.2,285.1 408.4,284.4 411.6,283.4 414.7,282.2 417.9,280.2 421.1,277.3 424.3,273.9 427.5,272.0 430.7,269.2 433.9,266.6 437.1,264.1 440.3,261.6 443.5,258.3 446.7,256.1 449.8,253.6 453.0,250.9 456.2,248.7 459.4,247.0 462.6,245.6 465.8,244.9 469.0,244.7 472.2,245.0 475.4,245.0 478.6,244.5 481.8,244.3 484.9,245.3 488.1,245.8 491.3,245.6 494.5,246.6 497.7,248.2 500.9,250.5 504.1,252.5 507.3,255.1 510.5,256.7 513.7,258.1 516.9,259.9 520.0,262.0 523.2,264.2 526.4,267.0 529.6,269.1 532.8,270.6 536.0,271.8 539.2,274.3 542.4,278.7 545.6,282.7 548.8,286.7 552.0,291.5 555.1,296.6 558.3,300.1 561.5,304.0 564.7,306.5 567.9,309.6 571.1,313.4 574.3,317.5 577.5,323.1 580.7,327.2 583.9,331.0 587.1,333.8 590.2,336.2 593.4,339.3 596.6,342.4 599.8,344.8 603.0,346.3 606.2,346.7 609.4,346.9 612.6,346.4 615.8,345.6 619.0,344.5 622.2,344.6 625.3,344.1 628.5,344.6 631.7,344.5 634.9,342.7 638.1,341.1 641.3,338.9 644.5,336.9 647.7,335.1 650.9,333.3 654.1,331.2 657.3,329.0 660.4,326.8 663.6,325.7 666.8,324.8 670.0,323.1 673.2,321.4 676.4,319.7 679.6,318.9 682.8,317.8 686.0,316.5 689.2,314.8 692.4,313.4 695.5,312.2 698.7,312.0 701.9,311.8 705.1,311.7 708.3,312.1 711.5,312.6 714.7,313.8 717.9,314.3 721.1,315.0 724.3,315.5 727.5,315.4 730.6,315.7 733.8,316.6 737.0,317.6 740.2,319.1 743.4,319.9 746.6,320.9 749.8,322.3 753.0,324.6 756.2,327.0 759.4,329.2 762.6,330.5 765.7,332.1 768.9,332.9 772.1,333.7 775.3,334.4 778.5,334.6 781.7,335.3 784.9,335.6 788.1,335.6 791.3,336.1 794.5,335.7 797.7,335.3 800.8,335.2 804.0,333.6 807.2,331.9 810.4,330.5 813.6,328.7 816.8,326.3 820.0,323.2 823.2,319.8 826.4,316.5 829.6,313.4 832.8,310.1 835.9,307.1 839.1,303.7 842.3,301.3 845.5,298.9 848.7,296.2 851.9,294.4 855.1,291.5 858.3,289.1 861.5,286.1 864.7,283.2 867.9,281.5 871.0,279.9 874.2,278.5 877.4,276.8 880.6,274.8 883.8,273.5 887.0,272.0 890.2,270.1" fill="none" stroke="#f2a81a" stroke-width="2.4" shape-rendering="crispEdges" stroke-linejoin="round"/>
<polyline points="9.5,124.8 12.7,127.2 15.9,130.5 19.1,135.9 22.3,143.1 25.5,150.6 28.6,160.7 31.8,168.2 35.0,172.8 38.2,175.9 41.4,178.6 44.6,183.5 47.8,186.0 51.0,187.6 54.2,188.7 57.4,191.0 60.6,191.8 63.7,191.8 66.9,194.2 70.1,195.8 73.3,196.9 76.5,199.0 79.7,201.5 82.9,205.1 86.1,205.3 89.3,203.2 92.5,198.8 95.7,195.7 98.8,193.2 102.0,193.4 105.2,194.4 108.4,192.6 111.6,191.5 114.8,189.8 118.0,189.8 121.2,189.0 124.4,187.5 127.6,186.7 130.8,185.3 133.9,181.8 137.1,177.2 140.3,174.1 143.5,170.9 146.7,166.6 149.9,161.5 153.1,158.0 156.3,155.8 159.5,154.3 162.7,152.1 165.9,150.0 169.0,149.2 172.2,149.6 175.4,149.5 178.6,149.9 181.8,151.9 185.0,152.6 188.2,153.9 191.4,155.2 194.6,157.4 197.8,159.1 201.0,160.2 204.1,159.8 207.3,160.6 210.5,162.2 213.7,162.2 216.9,164.7 220.1,167.4 223.3,168.9 226.5,170.1 229.7,171.9 232.9,174.0 236.1,177.6 239.2,182.5 242.4,185.8 245.6,189.3 248.8,194.1 252.0,197.1 255.2,200.9 258.4,203.8 261.6,206.7 264.8,209.5 268.0,209.8 271.2,208.2 274.3,207.6 277.5,206.9 280.7,203.9 283.9,202.3 287.1,199.9 290.3,197.8 293.5,196.1 296.7,194.1 299.9,194.7 303.1,195.3 306.3,194.3 309.4,194.7 312.6,198.1 315.8,201.9 319.0,208.6 322.2,215.9 325.4,223.0 328.6,232.4 331.8,239.6 335.0,249.4 338.2,262.0 341.4,271.3 344.5,275.4 347.7,280.0 350.9,282.6 354.1,286.9 357.3,292.4 360.5,296.0 363.7,298.1 366.9,298.3 370.1,294.9 373.3,293.6 376.5,294.2 379.6,295.5 382.8,295.6 386.0,293.9 389.2,291.4 392.4,287.1 395.6,284.6 398.8,281.2 402.0,278.3 405.2,276.6 408.4,274.6 411.6,271.4 414.7,268.8 417.9,266.6 421.1,263.2 424.3,260.8 427.5,259.3 430.7,257.3 433.9,254.9 437.1,251.7 440.3,248.6 443.5,245.3 446.7,243.4 449.8,240.6 453.0,238.5 456.2,236.7 459.4,234.8 462.6,233.9 465.8,234.8 469.0,237.8 472.2,241.4 475.4,244.6 478.6,245.6 481.8,248.0 484.9,252.0 488.1,254.8 491.3,256.3 494.5,259.3 497.7,261.5 500.9,263.3 504.1,263.6 507.3,265.6 510.5,267.8 513.7,268.2 516.9,267.8 520.0,269.1 523.2,272.0 526.4,274.8 529.6,276.6 532.8,278.0 536.0,280.0 539.2,283.0 542.4,289.6 545.6,297.2 548.8,305.7 552.0,313.8 555.1,321.2 558.3,325.4 561.5,331.5 564.7,335.1 567.9,339.2 571.1,343.9 574.3,345.4 577.5,349.1 580.7,348.7 583.9,348.1 587.1,346.3 590.2,346.9 593.4,347.1 596.6,349.6 599.8,350.3 603.0,348.8 606.2,348.0 609.4,344.6 612.6,344.0 615.8,343.0 619.0,342.8 622.2,342.2 625.3,341.0 628.5,339.5 631.7,338.7 634.9,336.6 638.1,334.2 641.3,333.3 644.5,329.8 647.7,327.2 650.9,323.7 654.1,320.2 657.3,316.9 660.4,314.1 663.6,312.8 666.8,313.0 670.0,312.0 673.2,309.6 676.4,309.7 679.6,310.6 682.8,311.8 686.0,312.8 689.2,312.8 692.4,312.7 695.5,311.6 698.7,311.1 701.9,311.6 705.1,313.7 708.3,314.5 711.5,314.7 714.7,315.8 717.9,315.8 721.1,317.3 724.3,318.3 727.5,319.2 730.6,320.4 733.8,321.7 737.0,321.4 740.2,323.7 743.4,325.1 746.6,325.9 749.8,328.8 753.0,332.0 756.2,335.6 759.4,339.1 762.6,340.6 765.7,342.5 768.9,344.5 772.1,343.7 775.3,343.7 778.5,343.2 781.7,341.8 784.9,339.3 788.1,335.7 791.3,333.1 794.5,330.8 797.7,328.1 800.8,325.9 804.0,323.5 807.2,320.1 810.4,317.7 813.6,315.6 816.8,313.4 820.0,310.7 823.2,306.5 826.4,302.3 829.6,298.6 832.8,294.4 835.9,290.8 839.1,287.3 842.3,284.9 845.5,282.1 848.7,279.1 851.9,278.1 855.1,276.5 858.3,275.8 861.5,273.7 864.7,272.1 867.9,272.2 871.0,272.4 874.2,272.0 877.4,271.5 880.6,270.6 883.8,268.9 887.0,267.6 890.2,264.4" fill="none" stroke="#1414b4" stroke-width="1" shape-rendering="crispEdges" stroke-linejoin="round"/>
<polyline points="9.5,135.5 12.7,138.8 15.9,143.0 19.1,149.5 22.3,157.9 25.5,165.7 28.6,182.7 31.8,193.4 35.0,196.1 38.2,194.0 41.4,191.4 44.6,184.3 47.8,178.6 51.0,179.2 54.2,183.3 57.4,190.6 60.6,199.3 63.7,205.1 66.9,209.2 70.1,208.3 73.3,203.2 76.5,198.8 79.7,198.0 82.9,201.0 86.1,202.4 89.3,203.2 92.5,198.7 95.7,193.5 98.8,185.5 102.0,184.4 105.2,185.6 108.4,186.4 111.6,189.6 114.8,194.1 118.0,195.3 121.2,192.3 124.4,188.5 127.6,183.8 130.8,176.4 133.9,168.2 137.1,162.1 140.3,159.7 143.5,158.0 146.7,156.8 149.9,154.8 153.1,153.9 156.3,151.8 159.5,150.6 162.7,147.4 165.9,145.2 169.0,144.4 172.2,147.3 175.4,148.4 178.6,152.4 181.8,158.5 185.0,160.7 188.2,160.6 191.4,162.0 194.6,162.5 197.8,159.6 201.0,159.6 204.1,159.0 207.3,159.1 210.5,161.8 213.7,164.9 216.9,169.9 220.1,175.8 223.3,178.7 226.5,178.4 229.7,178.8 232.9,178.1 236.1,179.4 239.2,186.2 242.4,193.2 245.6,199.7 248.8,210.1 252.0,214.8 255.2,215.6 258.4,214.3 261.6,213.7 264.8,208.9 268.0,204.7 271.2,200.7 274.3,200.9 277.5,200.1 280.7,199.0 283.9,199.9 287.1,199.1 290.3,194.6 293.5,192.1 296.7,189.2 299.9,189.4 303.1,191.5 306.3,194.0 309.4,197.3 312.6,206.9 315.8,214.3 319.0,225.7 322.2,237.7 325.4,248.6 328.6,257.9 331.8,265.0 335.0,273.0 338.2,286.2 341.4,293.9 344.5,293.0 347.7,295.0 350.9,292.3 354.1,287.6 357.3,290.9 360.5,299.0 363.7,301.2 366.9,304.3 370.1,302.2 373.3,296.2 376.5,289.4 379.6,289.8 382.8,286.9 386.0,285.5 389.2,286.5 392.4,284.7 395.6,279.5 398.8,275.5 402.0,271.1 405.2,266.6 408.4,264.5 411.6,263.2 414.7,262.2 417.9,262.1 421.1,259.8 424.3,257.0 427.5,255.3 430.7,252.3 433.9,247.8 437.1,243.5 440.3,240.2 443.5,235.2 446.7,234.6 449.8,233.5 453.0,233.6 456.2,233.2 459.4,234.3 462.6,233.2 465.8,236.1 469.0,241.9 472.2,249.7 475.4,255.0 478.6,258.0 481.8,259.8 484.9,262.2 488.1,260.0 491.3,257.7 494.5,260.6 497.7,263.2 500.9,264.4 504.1,267.3 507.3,273.5 510.5,274.9 513.7,273.2 516.9,271.2 520.0,270.8 523.2,270.5 526.4,274.6 529.6,280.1 532.8,284.7 536.0,289.2 539.2,295.5 542.4,304.7 545.6,314.3 548.8,326.7 552.0,338.5 555.1,346.9 558.3,346.2 561.5,348.7 564.7,343.5 567.9,340.0 571.1,340.8 574.3,344.5 577.5,349.5 580.7,353.9 583.9,356.3 587.1,351.9 590.2,349.2 593.4,344.7 596.6,345.3 599.8,344.2 603.0,345.7 606.2,346.8 609.4,344.5 612.6,342.7 615.8,341.8 619.0,339.9 622.2,337.6 625.3,337.6 628.5,336.3 631.7,335.5 634.9,333.4 638.1,330.8 641.3,328.9 644.5,323.2 647.7,318.8 650.9,314.0 654.1,309.7 657.3,304.9 660.4,305.0 663.6,306.8 666.8,311.9 670.0,314.3 673.2,314.3 676.4,314.3 679.6,314.3 682.8,311.7 686.0,311.4 689.2,311.2 692.4,311.1 695.5,308.8 698.7,310.4 701.9,311.9 705.1,316.2 708.3,317.9 711.5,320.6 714.7,321.2 717.9,319.8 721.1,318.4 724.3,318.7 727.5,317.8 730.6,319.6 733.8,323.6 737.0,324.4 740.2,328.6 743.4,332.5 746.6,332.2 749.8,334.0 753.0,339.5 756.2,342.6 759.4,345.7 762.6,348.9 765.7,351.0 768.9,349.4 772.1,344.8 775.3,341.6 778.5,337.6 781.7,332.6 784.9,329.1 788.1,326.6 791.3,324.5 794.5,324.1 797.7,323.6 800.8,322.6 804.0,320.3 807.2,315.6 810.4,311.3 813.6,307.6 816.8,304.1 820.0,301.2 823.2,297.3 826.4,293.3 829.6,289.7 832.8,284.6 835.9,280.4 839.1,277.2 842.3,276.6 845.5,274.6 848.7,273.6 851.9,275.7 855.1,275.7 858.3,275.1 861.5,272.8 864.7,270.6 867.9,268.7 871.0,269.1 874.2,268.9 877.4,270.2 880.6,270.5 883.8,269.1 887.0,266.0 890.2,259.8" fill="none" stroke="#e81cc8" stroke-width="1" shape-rendering="crispEdges" stroke-linejoin="round"/>
<path d="M11 134h3V154h-3zM30 200h3V217h-3zM31 217h1V229h-1zM33 181h3V189h-3zM36 177h3V189h-3zM46 171h3V179h-3zM62 200h3V212h-3zM68 193h3V209h-3zM71 191h3V206h-3zM78 196h3V202h-3zM84 200h3V207h-3zM87 195h3V203h-3zM90 183h3V195h-3zM94 170h3V179h-3zM103 201h3V204h-3zM104 195h1V201h-1zM104 204h1V208h-1zM106 187h3V192h-3zM110 186h3V189h-3zM111 183h1V186h-1zM111 189h1V190h-1zM116 201h3V202h-3zM117 199h1V201h-1zM117 202h1V206h-1zM119 186h3V194h-3zM122 168h3V176h-3zM126 162h3V170h-3zM132 160h3V166h-3zM135 155h3V157h-3zM136 154h1V155h-1zM136 157h1V159h-1zM138 156h3V160h-3zM139 160h1V163h-1zM148 150h3V156h-3zM154 145h3V151h-3zM157 148h3V150h-3zM158 146h1V148h-1zM158 150h1V152h-1zM161 143h3V149h-3zM164 139h3V141h-3zM165 138h1V139h-1zM165 141h1V142h-1zM173 153h3V157h-3zM174 152h1V153h-1zM174 157h1V161h-1zM183 158h3V168h-3zM184 168h1V170h-1zM189 161h3V164h-3zM190 164h1V167h-1zM196 155h3V162h-3zM205 161h3V163h-3zM206 160h1V161h-1zM206 163h1V166h-1zM212 170h3V174h-3zM221 176h3V183h-3zM224 178h3V185h-3zM228 172h3V175h-3zM229 170h1V172h-1zM229 175h1V176h-1zM240 212h3V220h-3zM241 211h1V212h-1zM241 220h1V233h-1zM244 205h3V215h-3zM250 216h3V227h-3zM256 206h3V213h-3zM263 207h3V216h-3zM264 205h1V207h-1zM264 216h1V219h-1zM266 195h3V205h-3zM276 198h3V204h-3zM277 196h1V198h-1zM277 204h1V209h-1zM285 190h3V195h-3zM288 184h3V189h-3zM289 189h1V192h-1zM291 186h3V188h-3zM304 197h3V201h-3zM305 201h1V206h-1zM307 202h3V204h-3zM308 201h1V202h-1zM308 204h1V206h-1zM314 238h3V245h-3zM315 245h1V254h-1zM323 257h3V266h-3zM324 266h1V272h-1zM330 273h3V277h-3zM331 270h1V273h-1zM331 277h1V284h-1zM339 295h3V319h-3zM343 276h3V290h-3zM344 290h1V291h-1zM349 284h3V289h-3zM350 289h1V293h-1zM362 294h3V312h-3zM368 289h3V295h-3zM371 281h3V284h-3zM372 280h1V281h-1zM372 284h1V285h-1zM381 285h3V295h-3zM382 295h1V298h-1zM384 282h3V291h-3zM390 274h3V280h-3zM394 270h3V278h-3zM400 260h3V264h-3zM406 264h3V266h-3zM407 266h1V270h-1zM410 263h3V266h-3zM411 266h1V267h-1zM413 260h3V265h-3zM419 253h3V254h-3zM420 250h1V253h-1zM420 254h1V256h-1zM422 250h3V254h-3zM423 254h1V256h-1zM429 245h3V254h-3zM432 237h3V242h-3zM435 231h3V237h-3zM438 233h3V235h-3zM439 232h1V233h-1zM439 235h1V237h-1zM441 230h3V234h-3zM442 234h1V236h-1zM448 231h3V233h-3zM449 229h1V231h-1zM449 233h1V236h-1zM451 232h3V234h-3zM452 230h1V232h-1zM452 234h1V237h-1zM461 236h3V240h-3zM462 240h1V243h-1zM473 262h3V266h-3zM474 266h1V270h-1zM477 251h3V260h-3zM478 260h1V262h-1zM486 259h3V270h-3zM489 251h3V262h-3zM502 273h3V277h-3zM508 273h3V274h-3zM509 271h1V273h-1zM509 274h1V276h-1zM512 259h3V263h-3zM515 269h3V276h-3zM516 276h1V280h-1zM528 286h3V289h-3zM529 285h1V286h-1zM529 289h1V290h-1zM534 294h3V298h-3zM535 298h1V306h-1zM544 334h3V339h-3zM545 333h1V334h-1zM545 339h1V348h-1zM553 354h3V359h-3zM554 351h1V354h-1zM554 359h1V364h-1zM556 336h3V347h-3zM563 328h3V342h-3zM572 355h3V358h-3zM573 358h1V362h-1zM579 350h3V360h-3zM582 348h3V360h-3zM585 336h3V340h-3zM586 340h1V345h-1zM598 342h3V344h-3zM599 338h1V342h-1zM607 337h3V345h-3zM614 337h3V339h-3zM615 339h1V341h-1zM617 333h3V338h-3zM623 337h3V345h-3zM624 345h1V347h-1zM627 338h3V341h-3zM628 341h1V345h-1zM630 333h3V337h-3zM633 323h3V332h-3zM642 309h3V313h-3zM643 313h1V315h-1zM649 299h3V311h-3zM668 313h3V320h-3zM671 304h3V311h-3zM681 311h3V322h-3zM682 322h1V324h-1zM684 311h3V316h-3zM700 319h3V323h-3zM701 316h1V319h-1zM701 323h1V325h-1zM706 318h3V321h-3zM707 321h1V325h-1zM716 311h3V320h-3zM722 320h3V325h-3zM723 325h1V327h-1zM725 318h3V320h-3zM726 316h1V318h-1zM726 320h1V323h-1zM735 322h3V326h-3zM736 326h1V327h-1zM741 337h3V341h-3zM742 336h1V337h-1zM742 341h1V345h-1zM745 330h3V336h-3zM757 353h3V356h-3zM758 352h1V353h-1zM758 356h1V365h-1zM761 346h3V356h-3zM762 356h1V360h-1zM767 342h3V352h-3zM768 340h1V342h-1zM768 352h1V353h-1zM770 333h3V338h-3zM777 326h3V333h-3zM786 320h3V323h-3zM787 319h1V320h-1zM787 323h1V324h-1zM792 324h3V325h-3zM793 322h1V324h-1zM793 325h1V327h-1zM796 323h3V327h-3zM797 327h1V329h-1zM799 320h3V324h-3zM802 308h3V314h-3zM805 303h3V308h-3zM808 302h3V304h-3zM809 301h1V302h-1zM809 304h1V306h-1zM815 302h3V306h-3zM816 306h1V309h-1zM818 294h3V299h-3zM821 284h3V288h-3zM824 282h3V284h-3zM825 281h1V282h-1zM825 284h1V285h-1zM831 277h3V285h-3zM834 272h3V275h-3zM837 268h3V276h-3zM844 277h3V279h-3zM845 276h1V277h-1zM845 279h1V282h-1zM847 272h3V274h-3zM848 274h1V276h-1zM853 268h3V278h-3zM856 275h3V277h-3zM857 272h1V275h-1zM857 277h1V278h-1zM859 265h3V275h-3zM863 261h3V264h-3zM864 264h1V267h-1zM869 270h3V272h-3zM870 268h1V270h-1zM870 272h1V276h-1zM875 272h3V277h-3zM876 277h1V281h-1zM879 263h3V269h-3zM880 261h1V263h-1zM885 254h3V265h-3zM888 243h3V248h-3zM889 248h1V252h-1z" fill="#e8190c" shape-rendering="crispEdges"/>
<path d="M8 151h3V154h-3zM9 145h1V151h-1zM9 154h1V158h-1zM14 137h3V146h-3zM17 152h3V167h-3zM18 167h1V171h-1zM20 162h3V188h-3zM23 185h3V193h-3zM24 180h1V185h-1zM24 193h1V194h-1zM27 191h3V219h-3zM28 219h1V220h-1zM39 175h3V180h-3zM43 180h3V184h-3zM44 175h1V180h-1zM44 184h1V189h-1zM49 168h3V184h-3zM52 191h3V198h-3zM55 207h3V216h-3zM56 205h1V207h-1zM56 216h1V219h-1zM59 212h3V227h-3zM65 195h3V204h-3zM66 186h1V195h-1zM66 204h1V212h-1zM75 202h3V205h-3zM76 196h1V202h-1zM76 205h1V207h-1zM81 203h3V219h-3zM97 173h3V180h-3zM98 180h1V183h-1zM100 187h3V195h-3zM101 195h1V196h-1zM113 186h3V202h-3zM129 158h3V165h-3zM142 151h3V154h-3zM143 150h1V151h-1zM143 154h1V155h-1zM145 153h3V159h-3zM151 146h3V151h-3zM167 145h3V147h-3zM168 144h1V145h-1zM168 147h1V148h-1zM170 151h3V160h-3zM177 154h3V163h-3zM180 167h3V170h-3zM181 166h1V167h-1zM181 170h1V176h-1zM186 156h3V159h-3zM193 162h3V165h-3zM194 161h1V162h-1zM194 165h1V166h-1zM199 154h3V158h-3zM202 154h3V156h-3zM203 153h1V154h-1zM203 156h1V157h-1zM209 172h3V179h-3zM215 181h3V183h-3zM216 183h1V188h-1zM218 179h3V186h-3zM219 186h1V188h-1zM231 171h3V179h-3zM234 186h3V192h-3zM237 194h3V210h-3zM247 213h3V231h-3zM253 208h3V214h-3zM254 204h1V208h-1zM254 214h1V215h-1zM260 200h3V202h-3zM261 197h1V200h-1zM261 202h1V205h-1zM269 192h3V194h-3zM270 191h1V192h-1zM270 194h1V196h-1zM272 193h3V207h-3zM279 198h3V201h-3zM280 191h1V198h-1zM280 201h1V204h-1zM282 194h3V200h-3zM295 181h3V187h-3zM296 180h1V181h-1zM296 187h1V188h-1zM298 188h3V200h-3zM301 196h3V200h-3zM311 216h3V235h-3zM317 239h3V258h-3zM318 236h1V239h-1zM318 258h1V261h-1zM320 246h3V257h-3zM321 239h1V246h-1zM327 253h3V281h-3zM328 281h1V286h-1zM333 269h3V298h-3zM336 297h3V323h-3zM337 293h1V297h-1zM346 280h3V283h-3zM347 276h1V280h-1zM347 283h1V288h-1zM352 285h3V299h-3zM355 295h3V312h-3zM356 312h1V316h-1zM358 308h3V317h-3zM359 305h1V308h-1zM359 317h1V324h-1zM365 295h3V299h-3zM366 287h1V295h-1zM366 299h1V301h-1zM374 281h3V283h-3zM375 276h1V281h-1zM375 283h1V285h-1zM378 285h3V296h-3zM379 296h1V298h-1zM387 282h3V286h-3zM388 280h1V282h-1zM388 286h1V292h-1zM397 262h3V265h-3zM398 259h1V262h-1zM398 265h1V266h-1zM403 259h3V264h-3zM404 256h1V259h-1zM416 254h3V259h-3zM417 252h1V254h-1zM426 250h3V255h-3zM427 255h1V257h-1zM445 234h3V242h-3zM454 229h3V231h-3zM455 228h1V229h-1zM455 231h1V232h-1zM457 230h3V236h-3zM464 235h3V246h-3zM467 251h3V261h-3zM470 264h3V270h-3zM471 261h1V264h-1zM471 270h1V271h-1zM480 248h3V255h-3zM481 246h1V248h-1zM483 270h3V273h-3zM484 269h1V270h-1zM484 273h1V276h-1zM493 256h3V266h-3zM496 261h3V268h-3zM499 267h3V279h-3zM500 279h1V281h-1zM505 274h3V282h-3zM506 282h1V284h-1zM518 267h3V272h-3zM519 266h1V267h-1zM519 272h1V273h-1zM521 274h3V280h-3zM524 278h3V294h-3zM531 288h3V292h-3zM532 286h1V288h-1zM532 292h1V295h-1zM537 295h3V312h-3zM540 318h3V340h-3zM541 340h1V342h-1zM547 336h3V354h-3zM548 331h1V336h-1zM548 354h1V359h-1zM550 343h3V353h-3zM560 328h3V347h-3zM566 333h3V335h-3zM567 328h1V333h-1zM569 345h3V358h-3zM575 357h3V372h-3zM588 335h3V342h-3zM589 329h1V335h-1zM591 340h3V349h-3zM592 349h1V353h-1zM595 350h3V353h-3zM596 348h1V350h-1zM601 340h3V343h-3zM602 336h1V340h-1zM602 343h1V346h-1zM604 341h3V347h-3zM611 341h3V344h-3zM612 337h1V341h-1zM620 335h3V336h-3zM621 334h1V335h-1zM621 336h1V337h-1zM636 322h3V323h-3zM637 320h1V322h-1zM637 323h1V326h-1zM639 326h3V328h-3zM640 324h1V326h-1zM640 328h1V329h-1zM646 308h3V311h-3zM652 298h3V301h-3zM653 297h1V298h-1zM653 301h1V304h-1zM655 302h3V304h-3zM656 301h1V302h-1zM656 304h1V306h-1zM658 302h3V310h-3zM659 301h1V302h-1zM662 307h3V320h-3zM665 320h3V324h-3zM666 318h1V320h-1zM666 324h1V325h-1zM674 304h3V310h-3zM678 309h3V320h-3zM687 300h3V303h-3zM688 299h1V300h-1zM688 303h1V304h-1zM690 302h3V309h-3zM694 304h3V309h-3zM697 312h3V320h-3zM698 309h1V312h-1zM703 319h3V325h-3zM704 325h1V326h-1zM709 320h3V322h-3zM713 320h3V323h-3zM714 318h1V320h-1zM714 323h1V325h-1zM719 314h3V318h-3zM720 310h1V314h-1zM729 322h3V332h-3zM730 332h1V333h-1zM732 327h3V331h-3zM733 331h1V333h-1zM738 330h3V340h-3zM748 334h3V340h-3zM751 340h3V350h-3zM752 350h1V353h-1zM754 342h3V356h-3zM755 356h1V357h-1zM764 343h3V351h-3zM773 332h3V337h-3zM774 330h1V332h-1zM780 323h3V326h-3zM781 326h1V328h-1zM783 323h3V325h-3zM784 322h1V323h-1zM784 325h1V326h-1zM789 321h3V326h-3zM790 319h1V321h-1zM790 326h1V328h-1zM812 299h3V305h-3zM813 298h1V299h-1zM828 284h3V287h-3zM829 282h1V284h-1zM829 287h1V288h-1zM840 268h3V278h-3zM850 270h3V283h-3zM851 268h1V270h-1zM851 283h1V285h-1zM866 269h3V274h-3zM867 266h1V269h-1zM867 274h1V276h-1zM872 268h3V274h-3zM873 267h1V268h-1zM873 274h1V277h-1zM882 261h3V267h-3zM883 259h1V261h-1z" fill="#1b5ccd" shape-rendering="crispEdges"/>
<path d="M7 77.5H989M7.5 77V583M8 391.5H989M8 547.5H989M8 565.5H989M923.5 78V566M988.5 78V566" stroke="#8e8e8e" fill="none" shape-rendering="crispEdges"/>
<text class="s" y="559.7" fill="#404040" stroke="#404040"><tspan x="92.5" font-size="14" textLength="12.1" lengthAdjust="spacingAndGlyphs">03</tspan></text>
<text class="s" y="559.7" fill="#404040" stroke="#404040"><tspan x="159.5" font-size="14" textLength="12.1" lengthAdjust="spacingAndGlyphs">04</tspan></text>
<text class="s" y="559.7" fill="#404040" stroke="#404040"><tspan x="226.5" font-size="14" textLength="12.1" lengthAdjust="spacingAndGlyphs">05</tspan></text>
<text class="s" y="559.7" fill="#404040" stroke="#404040"><tspan x="293.5" font-size="14" textLength="12.1" lengthAdjust="spacingAndGlyphs">06</tspan></text>
<text class="s" y="559.7" fill="#404040" stroke="#404040"><tspan x="357.5" font-size="14" textLength="12.1" lengthAdjust="spacingAndGlyphs">07</tspan></text>
<text class="s" y="559.7" fill="#404040" stroke="#404040"><tspan x="424.5" font-size="14" textLength="12.1" lengthAdjust="spacingAndGlyphs">08</tspan></text>
<text class="s" y="559.7" fill="#404040" stroke="#404040"><tspan x="495.5" font-size="14" textLength="12.1" lengthAdjust="spacingAndGlyphs">09</tspan></text>
<text class="s" y="559.7" fill="#404040" stroke="#404040"><tspan x="558.5" font-size="14" textLength="12.1" lengthAdjust="spacingAndGlyphs">10</tspan></text>
<text class="s" y="559.7" fill="#404040" stroke="#404040"><tspan x="619.5" font-size="14" textLength="12.1" lengthAdjust="spacingAndGlyphs">11</tspan></text>
<text class="s" y="559.7" fill="#404040" stroke="#404040"><tspan x="689.5" font-size="14" textLength="12.1" lengthAdjust="spacingAndGlyphs">12</tspan></text>
<text class="s" y="559.7" fill="#404040" stroke="#404040"><tspan x="756.5" font-size="14" textLength="40.5" lengthAdjust="spacingAndGlyphs">2023/01</tspan></text>
<text class="s" y="559.7" fill="#404040" stroke="#404040"><tspan x="820.5" font-size="14" textLength="12.1" lengthAdjust="spacingAndGlyphs">02</tspan></text>
<text class="s" y="559.7" fill="#404040" stroke="#404040"><tspan x="884.5" font-size="14" textLength="12.1" lengthAdjust="spacingAndGlyphs">03</tspan></text>
<path d="M90.5 548V565M157.5 548V565M224.5 548V565M291.5 548V565M355.5 548V565M422.5 548V565M493.5 548V565M556.5 548V565M617.5 548V565M687.5 548V565M754.5 548V565M818.5 548V565M882.5 548V565" stroke="#8e8e8e" fill="none" shape-rendering="crispEdges"/>
<text class="s" y="559.7" fill="#404040" stroke="#404040"><tspan x="9.7" font-size="14" textLength="40.5" lengthAdjust="spacingAndGlyphs">2022/01</tspan></text>
<text class="s" y="559.7" fill="#404040" stroke="#404040"><tspan x="931.6" font-size="14" textLength="29.5" lengthAdjust="spacingAndGlyphs">03/06</tspan></text>
<text class="s" y="106.0" fill="#404040" stroke="#404040"><tspan x="931.5" font-size="14" textLength="42.5" lengthAdjust="spacingAndGlyphs">1,000.00</tspan></text>
<text class="s" y="126.0" fill="#404040" stroke="#404040"><tspan x="931.5" font-size="14" textLength="33.4" lengthAdjust="spacingAndGlyphs">975.00</tspan></text>
<text class="s" y="145.0" fill="#404040" stroke="#404040"><tspan x="931.5" font-size="14" textLength="33.4" lengthAdjust="spacingAndGlyphs">950.00</tspan></text>
<text class="s" y="164.0" fill="#404040" stroke="#404040"><tspan x="931.5" font-size="14" textLength="33.4" lengthAdjust="spacingAndGlyphs">925.00</tspan></text>
<text class="s" y="183.0" fill="#404040" stroke="#404040"><tspan x="931.5" font-size="14" textLength="33.4" lengthAdjust="spacingAndGlyphs">900.00</tspan></text>
<text class="s" y="203.0" fill="#404040" stroke="#404040"><tspan x="931.5" font-size="14" textLength="33.4" lengthAdjust="spacingAndGlyphs">875.00</tspan></text>
<text class="s" y="222.0" fill="#404040" stroke="#404040"><tspan x="931.5" font-size="14" textLength="33.4" lengthAdjust="spacingAndGlyphs">850.00</tspan></text>
<text class="s" y="241.0" fill="#404040" stroke="#404040"><tspan x="931.5" font-size="14" textLength="33.4" lengthAdjust="spacingAndGlyphs">825.00</tspan></text>
<text class="s" y="260.0" fill="#404040" stroke="#404040"><tspan x="931.5" font-size="14" textLength="33.4" lengthAdjust="spacingAndGlyphs">800.00</tspan></text>
<text class="s" y="280.0" fill="#404040" stroke="#404040"><tspan x="931.5" font-size="14" textLength="33.4" lengthAdjust="spacingAndGlyphs">775.00</tspan></text>
<text class="s" y="299.0" fill="#404040" stroke="#404040"><tspan x="931.5" font-size="14" textLength="33.4" lengthAdjust="spacingAndGlyphs">750.00</tspan></text>
<text class="s" y="318.0" fill="#404040" stroke="#404040"><tspan x="931.5" font-size="14" textLength="33.4" lengthAdjust="spacingAndGlyphs">725.00</tspan></text>
<text class="s" y="337.0" fill="#404040" stroke="#404040"><tspan x="931.5" font-size="14" textLength="33.4" lengthAdjust="spacingAndGlyphs">700.00</tspan></text>
<text class="s" y="357.0" fill="#404040" stroke="#404040"><tspan x="931.5" font-size="14" textLength="33.4" lengthAdjust="spacingAndGlyphs">675.00</tspan></text>
<text class="s" y="376.0" fill="#404040" stroke="#404040"><tspan x="931.5" font-size="14" textLength="33.4" lengthAdjust="spacingAndGlyphs">650.00</tspan></text>
<text class="s" y="418.0" fill="#404040" stroke="#404040"><tspan x="931.5" font-size="14" textLength="34.6" lengthAdjust="spacingAndGlyphs">1,750K</tspan></text>
<text class="s" y="437.0" fill="#404040" stroke="#404040"><tspan x="931.5" font-size="14" textLength="34.6" lengthAdjust="spacingAndGlyphs">1,500K</tspan></text>
<text class="s" y="456.0" fill="#404040" stroke="#404040"><tspan x="931.5" font-size="14" textLength="34.6" lengthAdjust="spacingAndGlyphs">1,250K</tspan></text>
<text class="s" y="474.0" fill="#404040" stroke="#404040"><tspan x="931.5" font-size="14" textLength="34.6" lengthAdjust="spacingAndGlyphs">1,000K</tspan></text>
<text class="s" y="493.0" fill="#404040" stroke="#404040"><tspan x="931.5" font-size="14" textLength="39.5" lengthAdjust="spacingAndGlyphs">750,000</tspan></text>
<text class="s" y="512.0" fill="#404040" stroke="#404040"><tspan x="931.5" font-size="14" textLength="39.5" lengthAdjust="spacingAndGlyphs">500,000</tspan></text>
<text class="s" y="530.0" fill="#404040" stroke="#404040"><tspan x="931.5" font-size="14" textLength="39.5" lengthAdjust="spacingAndGlyphs">250,000</tspan></text>
<path d="M924 102.5H930M924 112.5H926M924 122.5H930M924 131.5H926M924 141.5H930M924 150.5H926M924 160.5H930M924 170.5H926M924 179.5H930M924 189.5H926M924 199.5H930M924 208.5H926M924 218.5H930M924 227.5H926M924 237.5H930M924 247.5H926M924 256.5H930M924 266.5H926M924 276.5H930M924 285.5H926M924 295.5H930M924 304.5H926M924 314.5H930M924 324.5H926M924 333.5H930M924 343.5H926M924 353.5H930M924 362.5H926M924 372.5H930M924 414.5H930M924 405.5H926M924 433.5H930M924 424.5H926M924 452.5H930M924 442.5H926M924 470.5H930M924 461.5H926M924 489.5H930M924 480.5H926M924 508.5H930M924 498.5H926M924 526.5H930M924 517.5H926M924 536.5H926M924 545.5H930" stroke="#6e6e6e" fill="none" shape-rendering="crispEdges"/>
<rect x="924" y="78" width="64" height="25" fill="#d8e4f1"/>
<text class="s" y="89.0" fill="#e8190c" stroke="#e8190c"><tspan x="924.8" font-size="14" textLength="47.0" lengthAdjust="spacingAndGlyphs">LC:25.54</tspan></text>
<text class="s" y="101.0" fill="#1450d0" stroke="#1450d0"><tspan x="924.8" font-size="14" textLength="54.0" lengthAdjust="spacingAndGlyphs">HC:-14.83</tspan></text>
<rect x="931" y="250" width="56" height="12" fill="#d8e4f1"/>
<rect x="928" y="237" width="58" height="13" fill="#e8190c" shape-rendering="crispEdges"/>
<text class="s" y="248.0" fill="#fff" stroke="#fff"><tspan x="931.5" font-size="14" textLength="33.4" lengthAdjust="spacingAndGlyphs">816.51</tspan></text>
<text class="s" y="260.0" fill="#e8190c" stroke="#e8190c"><tspan x="931.5" font-size="14" textLength="31.0" lengthAdjust="spacingAndGlyphs">1.76%</tspan></text>
<rect x="931" y="469" width="56" height="12" fill="#d8e4f1"/>
<rect x="928" y="456" width="58" height="13" fill="#1b5ccd" shape-rendering="crispEdges"/>
<text class="s" y="467.0" fill="#fff" stroke="#fff"><tspan x="931.5" font-size="14" textLength="34.6" lengthAdjust="spacingAndGlyphs">1,090K</tspan></text>
<text class="s" y="479.0" fill="#1450d0" stroke="#1450d0"><tspan x="931.5" font-size="14" textLength="37.0" lengthAdjust="spacingAndGlyphs">98.91%</tspan></text>
<rect x="978" y="395" width="8" height="7" fill="#3c3c3c"/><path d="M980 397l4 3M984 397l-4 3" stroke="#fff" stroke-width="1"/>
<rect x="11.5" y="83.5" width="4" height="5" fill="#c8c8c8" stroke="#8a8a8a" shape-rendering="crispEdges"/>
<rect x="18.5" y="79.5" width="89" height="14" fill="#efefef" stroke="#a6a6a6" shape-rendering="crispEdges"/>
<text y="90.5" fill="#202020"><tspan x="22.4" font-size="13" textLength="23.2" lengthAdjust="spacingAndGlyphs">종합</tspan><tspan x="46.0" font-size="14" textLength="59.3" lengthAdjust="spacingAndGlyphs">(KOSDAQ)</tspan></text>
<rect x="112.5" y="83.5" width="4" height="5" fill="#c8c8c8" stroke="#8a8a8a" shape-rendering="crispEdges"/>
<text class="s" y="90.5" fill="#e81cc8" stroke="#e81cc8"><tspan x="123.4" font-size="13" textLength="23.2" lengthAdjust="spacingAndGlyphs">종가</tspan></text>
<text class="s" y="90.5" fill="#e81cc8" stroke="#e81cc8"><tspan x="151.4" font-size="13" textLength="23.2" lengthAdjust="spacingAndGlyphs">단순</tspan></text>
<text class="s" y="90.5" fill="#e81cc8" stroke="#e81cc8"><tspan x="178.7" font-size="14" textLength="6.1" lengthAdjust="spacingAndGlyphs">5</tspan></text>
<text class="s" y="90.5" fill="#1430c0" stroke="#1430c0"><tspan x="193.3" font-size="14" textLength="12.1" lengthAdjust="spacingAndGlyphs">10</tspan></text>
<text class="s" y="90.5" fill="#f2a81a" stroke="#f2a81a"><tspan x="213.0" font-size="14" textLength="12.1" lengthAdjust="spacingAndGlyphs">20</tspan></text>
<text class="s" y="90.5" fill="#15a03c" stroke="#15a03c"><tspan x="233.3" font-size="14" textLength="12.1" lengthAdjust="spacingAndGlyphs">60</tspan></text>
<text class="s" y="90.5" fill="#6e6e6e" stroke="#6e6e6e"><tspan x="253.6" font-size="14" textLength="18.2" lengthAdjust="spacingAndGlyphs">120</tspan></text>
<rect x="11.5" y="397.5" width="4" height="5" fill="#c8c8c8" stroke="#8a8a8a" shape-rendering="crispEdges"/>
<text class="s" y="404.5" fill="#1e9696" stroke="#1e9696"><tspan x="22.4" font-size="13" textLength="35.2" lengthAdjust="spacingAndGlyphs">거래량</tspan></text>
<text class="s" y="404.5" fill="#e81cc8" stroke="#e81cc8"><tspan x="66.4" font-size="13" textLength="23.2" lengthAdjust="spacingAndGlyphs">단순</tspan></text>
<text class="s" y="404.5" fill="#e81cc8" stroke="#e81cc8"><tspan x="94.4" font-size="14" textLength="6.1" lengthAdjust="spacingAndGlyphs">5</tspan></text>
<text class="s" y="404.5" fill="#f2a81a" stroke="#f2a81a"><tspan x="108.7" font-size="14" textLength="12.1" lengthAdjust="spacingAndGlyphs">20</tspan></text>
<text class="s" y="404.5" fill="#15a03c" stroke="#15a03c"><tspan x="129.0" font-size="14" textLength="12.1" lengthAdjust="spacingAndGlyphs">60</tspan></text>
<text class="s" y="404.5" fill="#6e6e6e" stroke="#6e6e6e"><tspan x="148.6" font-size="14" textLength="18.2" lengthAdjust="spacingAndGlyphs">120</tspan></text>
<text y="417.3" fill="#202020"><tspan x="13.2" font-size="14" textLength="50.2" lengthAdjust="spacingAndGlyphs">1,090,225</tspan><tspan x="63.8" font-size="13" textLength="11.6" lengthAdjust="spacingAndGlyphs">주</tspan><tspan x="75.7" font-size="14" textLength="45.8" lengthAdjust="spacingAndGlyphs">(98.91%)</tspan></text>
<path d="M13.5 138l6.5 -5v10zM20 137.5h7.5v1H20z" fill="#e8190c"/>
<text class="s" y="141.8" fill="#e8190c" stroke="#e8190c"><tspan x="28.9" font-size="13" textLength="23.2" lengthAdjust="spacingAndGlyphs">최고</tspan></text>
<text class="s" y="141.8" fill="#e8190c" stroke="#e8190c"><tspan x="56.6" font-size="14" textLength="33.3" lengthAdjust="spacingAndGlyphs">958.70</tspan></text>
<text class="s" y="141.8" fill="#e8190c" stroke="#e8190c"><tspan x="95.0" font-size="14" textLength="38.3" lengthAdjust="spacingAndGlyphs">(01/20)</tspan></text>
<text class="s" y="374.3" fill="#1430c8" stroke="#1430c8"><tspan x="450.6" font-size="13" textLength="23.2" lengthAdjust="spacingAndGlyphs">최저</tspan></text>
<text class="s" y="374.3" fill="#1430c8" stroke="#1430c8"><tspan x="479.0" font-size="14" textLength="33.3" lengthAdjust="spacingAndGlyphs">650.39</tspan></text>
<text class="s" y="374.3" fill="#1430c8" stroke="#1430c8"><tspan x="517.0" font-size="14" textLength="38.3" lengthAdjust="spacingAndGlyphs">(10/13)</tspan></text>
<path d="M561.5 370h9v1h-9zM570.5 365.5l6.5 5 -6.5 5z" fill="#1430c8"/>
<path d="M16.300 570.5v8l-4.600-4zM627 571v7l4.200-3.5zM644 571v7l-4.200-3.5zM648.200 571v7l-4.200-3.5zM675 571v7l4.200-3.5zM679.200 571v7l4.200-3.5z" fill="#000"/><rect x="658.800" y="570.5" width="6.5" height="7" fill="#000"/>
<path d="M693 570.5h69" stroke="#9a9a9a"/><path d="M693 571.5h69" stroke="#fff"/>
<rect x="725.5" y="567.5" width="2" height="9" fill="#e0e0e0" stroke="#8a8a8a"/><path d="M725.5 576.5l1 2 1-2" fill="#e0e0e0" stroke="#8a8a8a"/>
<path d="M695.5 580v2.5M702.5 580v2.5M708.5 580v2.5M715.5 580v2.5M721.5 580v2.5M728.5 580v2.5M734.5 580v2.5M741.5 580v2.5M748.5 580v2.5M754.5 580v2.5M761.5 580v2.5" stroke="#303030" shape-rendering="crispEdges"/>
<g fill="none" stroke="#8a8a8a" stroke-width="1"><rect x="770.5" y="568.5" width="9" height="8"/><rect x="776.5" y="574.5" width="6" height="6" fill="#f1f1f1"/><path d="M776.5 577.5h6M779.5 574.5v6"/><rect x="787.5" y="568.5" width="9" height="7"/><rect x="791.5" y="572.5" width="9" height="8" fill="#f1f1f1"/><path d="M792 575h8" stroke-width="2" stroke="#b8b8b8"/><path d="M804 569.5h11M804 579.5h11" stroke-dasharray="1 1" stroke="#505050"/><path d="M804 574l4 3 3-3 4.5-3.5"/><path d="M817 568v3l-2.5-1.5zM817 578v3l-2.5-1.5z" fill="#505050" stroke="none"/></g>
<rect x="820" y="566" width="16" height="17" fill="#fbfbfb"/><path d="M819.5 566V583M820 566.5H835" stroke="#7e7e7e" fill="none" shape-rendering="crispEdges"/>
<g fill="none" stroke="#707070" stroke-width="1"><path d="M823 569.5h11M826.5 567v14M828 572l5 5M828 572v4M828 572h4"/><path d="M839 572.5h12M840 579l3-5 2 4 2-5 3 3" stroke="#8a8a8a"/><path d="M858.5 567v14M856 579l3-2 2-6 3 7 3-4" stroke="#8a8a8a"/><path d="M872 579l11-11M873 580l3-4 2 3 3-5 3 3" stroke="#8a8a8a"/><path d="M889 574l6-5h7l-6 5zM889 574v4h7v-4M896 578l6-5v-4" stroke="#8a8a8a"/><path d="M895.5 582v-3M897.5 582v-4M899.5 582v-5M901.5 582v-6" stroke="#303030"/><rect x="909.5" y="568.5" width="9" height="6" stroke="#8a8a8a"/><path d="M911 573l2-2 2 1.5 2-2" stroke="#9a9a9a"/><rect x="906.5" y="573.5" width="9" height="7" fill="#f1f1f1" stroke="#404040"/><path d="M908 579l2-2 2 1 3-3" stroke="#404040"/></g>
<circle cx="929.5" cy="573" r="4.5" fill="none" stroke="#505050" stroke-width="1.200"/><path d="M932.5 576.5l4.5 4.5" stroke="#505050" stroke-width="1.800"/>
<rect x="942" y="574" width="9" height="2" fill="#505050"/>
<rect x="958" y="574" width="11" height="2" fill="#505050"/><rect x="962.5" y="569.5" width="2" height="11" fill="#505050"/>
<text x="975" y="579.700" font-size="12.5" font-weight="bold" fill="#505050" textLength="11" lengthAdjust="spacingAndGlyphs">A</text>
<rect x="817.5" y="10.5" width="9" height="8" fill="#eef3fb" stroke="#2a62cc"/><rect x="817" y="10" width="10" height="2.5" fill="#2a62cc"/><rect x="821.5" y="8.5" width="8" height="6" fill="#f05a24" stroke="#1c50c0"/><rect x="824" y="10.700" width="3.5" height="2" fill="#fff"/>
<rect x="836.5" y="8.300" width="10.5" height="1.800" rx=".9" fill="#fff" stroke="#2a62cc" stroke-width=".9"/><path d="M842 11.5l5 4.800h-2.800v2.700h-4.400v-2.700h-2.800z" fill="#e8f0fc" stroke="#2a62cc" stroke-width="1.100" stroke-linejoin="round"/>
<rect x="856.5" y="9.5" width="8" height="8.5" fill="#fff" stroke="#2a62cc"/><rect x="857" y="9.200" width="2.5" height="2" fill="#e83820"/><rect x="859.5" y="9.200" width="2.5" height="2" fill="#f0a020"/><path d="M863.800 14v-2.300a1.900 1.900 0 0 1 3.800 0v2.300" fill="none" stroke="#303848" stroke-width="1.300"/><rect x="862" y="13.700" width="7.300" height="5.300" fill="#d6a648" stroke="#7a5a18" stroke-width=".7"/><path d="M862.300 15.5h6.700M862.300 17.300h6.700" stroke="#f2d890" stroke-width=".7"/>
<path d="M875.5 14h6" stroke="#e83020" stroke-width="1.400"/><path d="M882.300 9.300v9.400M888.700 9.300v9.400" stroke="#1c4cae" stroke-width="1.700"/><path d="M883.200 10.5q2.300 1.5 4.600 0v7q-2.300-1.5-4.600 0z" fill="#86aee6" stroke="#2a5cc0" stroke-width=".8"/>
<text x="896.5" y="18.5" font-size="15" font-style="italic" font-family="'Liberation Serif',serif" fill="#e02818">A</text>
<text x="919" y="18.5" font-size="13" font-weight="bold" font-family="'Liberation Sans',sans-serif" fill="#e01808">?</text>
<rect x="947.5" y="15.5" width="6.5" height="2" fill="#183860"/>
<rect x="964" y="10" width="7.5" height="6.5" fill="none" stroke="#183860" stroke-width="1.200"/><rect x="963.400" y="9" width="8.700" height="2.200" fill="#183860"/>
<path d="M980.800 9.800l7 6.700M987.800 9.800l-7 6.700" stroke="#183860" stroke-width="1.700"/>
<text x="8" y="18" font-size="11" font-weight="bold" font-family="'Liberation Serif',serif" fill="#fffbe8" stroke="#fffbe8" stroke-width=".4">1</text>
<path d="M14 34.5h8.5v9l-3.5 4h-5z" fill="#f0dcc0" stroke="#c8b090" stroke-width=".5"/><path d="M22.5 34.5v9.5" stroke="#24487c" stroke-width="1.200"/><path d="M10.5 37v10.5h8.5l-1-1h-4v-9.5z" fill="#2c5490"/><path d="M10.5 39h3.5v8.5h-3.5z" fill="#3c68a8"/><path d="M19 47.5l3.5-4h-3.5z" fill="#b8d4f0" stroke="#24487c" stroke-width=".6"/><circle cx="12.900" cy="37.5" r="3.300" fill="#0c1c48"/><path d="M13.800 35.700l-2.600 1.800 2.600 1.800z" fill="#fff"/>
<path d="M67.5 40h6l-3 3.5z" fill="#4a4a4a"/>
<path d="M159.5 40h6l-3 3.5z" fill="#4a4a4a"/>
<path d="M602 40h6l-3 3.5z" fill="#a0a0a0"/>
<circle cx="177" cy="39.5" r="3.5" fill="#d6e8fa" stroke="#1c50b4" stroke-width="1.5"/><circle cx="176" cy="38.5" r="1.200" fill="#fff"/><path d="M179.800 42.300l3.5 3" stroke="#1c3c90" stroke-width="3" stroke-linecap="round"/><path d="M180 42.5l3.200 2.700" stroke="#e0b060" stroke-width="1.5" stroke-linecap="round"/>
<path d="M193.5 38.5h2.700l5.300-3.700v12l-5.300-3.700h-2.700z" fill="#f8b428" stroke="#8a5a08" stroke-width=".7"/><path d="M201.5 34.800v12" stroke="#201808" stroke-width="1"/><path d="M203.5 38v7.5M203.5 38.5h4v3h-4" stroke="#101010" stroke-width="1" fill="none"/><rect x="204.5" y="39" width="2" height="2" fill="#e83820"/><rect x="204.5" y="42" width="1.800" height="2.200" fill="#2890e0"/><path d="M210 40h5.5l-2.750 3.300z" fill="#4a4a4a"/>
<path d="M688 35v8.5" stroke="#2a55c8" stroke-width="1"/><rect x="686" y="37" width="4.700" height="4.600" fill="#2a55c8"/><path d="M693.600 35v7" stroke="#e05a38" stroke-width="1"/><rect x="691.400" y="36.5" width="4.400" height="4.200" fill="#e05a38"/><rect x="686" y="43" width="5" height="3" fill="#5a8ae8" opacity=".75"/><path d="M682 44.5l4-3.200v6.400z" fill="#080808"/><path d="M686 43.700h2v1.600h-2z" fill="#080808"/>
<path d="M701.5 34v10M700 36.5h1.5M700 39.5h1.5M700 42.5h1.5M707 45.5h8.5M709.5 45.5v1.5M712.5 45.5v1.5" stroke="#a8a8a8" fill="none"/><path d="M704 38.5l3.5-2.5 3.5 3.5 3.5 3" stroke="#5a8ad8" stroke-width=".9" fill="none"/><path d="M705 41.800l3.5-2.600 2.700 2.800 4-3.600" stroke="#e81c18" stroke-width="1.600" fill="none"/><circle cx="704.5" cy="44.5" r="3.100" fill="#0c1c50"/><path d="M703 44.5h3M704.5 43v3" stroke="#fff" stroke-width="1.100"/>
<rect x="720.5" y="34.5" width="13" height="13" fill="#7c7c08" stroke="#080800" stroke-width="1.200"/><rect x="723.5" y="34.800" width="7.5" height="5" fill="#c2c2c2"/><rect x="723" y="43" width="9.5" height="4.5" fill="#080808"/><rect x="729.5" y="44" width="1.700" height="2.600" fill="#c8c8c8"/><rect x="732" y="35.5" width="1" height="1" fill="#d0d0d0"/>
<path d="M750.5 41.0L751.9 41.0M749.2 44.2L750.2 45.2M746.0 45.5L746.0 46.9M742.8 44.2L741.8 45.2M741.5 41.0L740.1 41.0M742.8 37.8L741.8 36.8M746.0 36.5L746.0 35.1M749.2 37.8L750.2 36.8" stroke="#b08810" stroke-width="3.400" stroke-linecap="round"/><path d="M750.5 41.0L751.9 41.0M749.2 44.2L750.2 45.2M746.0 45.5L746.0 46.9M742.8 44.2L741.8 45.2M741.5 41.0L740.1 41.0M742.8 37.8L741.8 36.8M746.0 36.5L746.0 35.1M749.2 37.8L750.2 36.8" stroke="#fad648" stroke-width="2" stroke-linecap="round"/><circle cx="746" cy="41" r="4.600" fill="#fad648" stroke="#c09414" stroke-width=".6"/><circle cx="746" cy="41" r="2.5" fill="#ea5a14"/><circle cx="746" cy="41" r="1.300" fill="#fff"/>
<rect x="825.5" y="36.5" width="10" height="9" fill="#fff" stroke="#383838"/><rect x="825" y="36" width="11" height="2.5" fill="#383838"/><path d="M827.5 41h2.5M831.5 41h2.5M827.5 43.300h2.5M831.5 43.300h2.5" stroke="#e88a28" stroke-width="1.300"/>
</svg>
</body></html>
